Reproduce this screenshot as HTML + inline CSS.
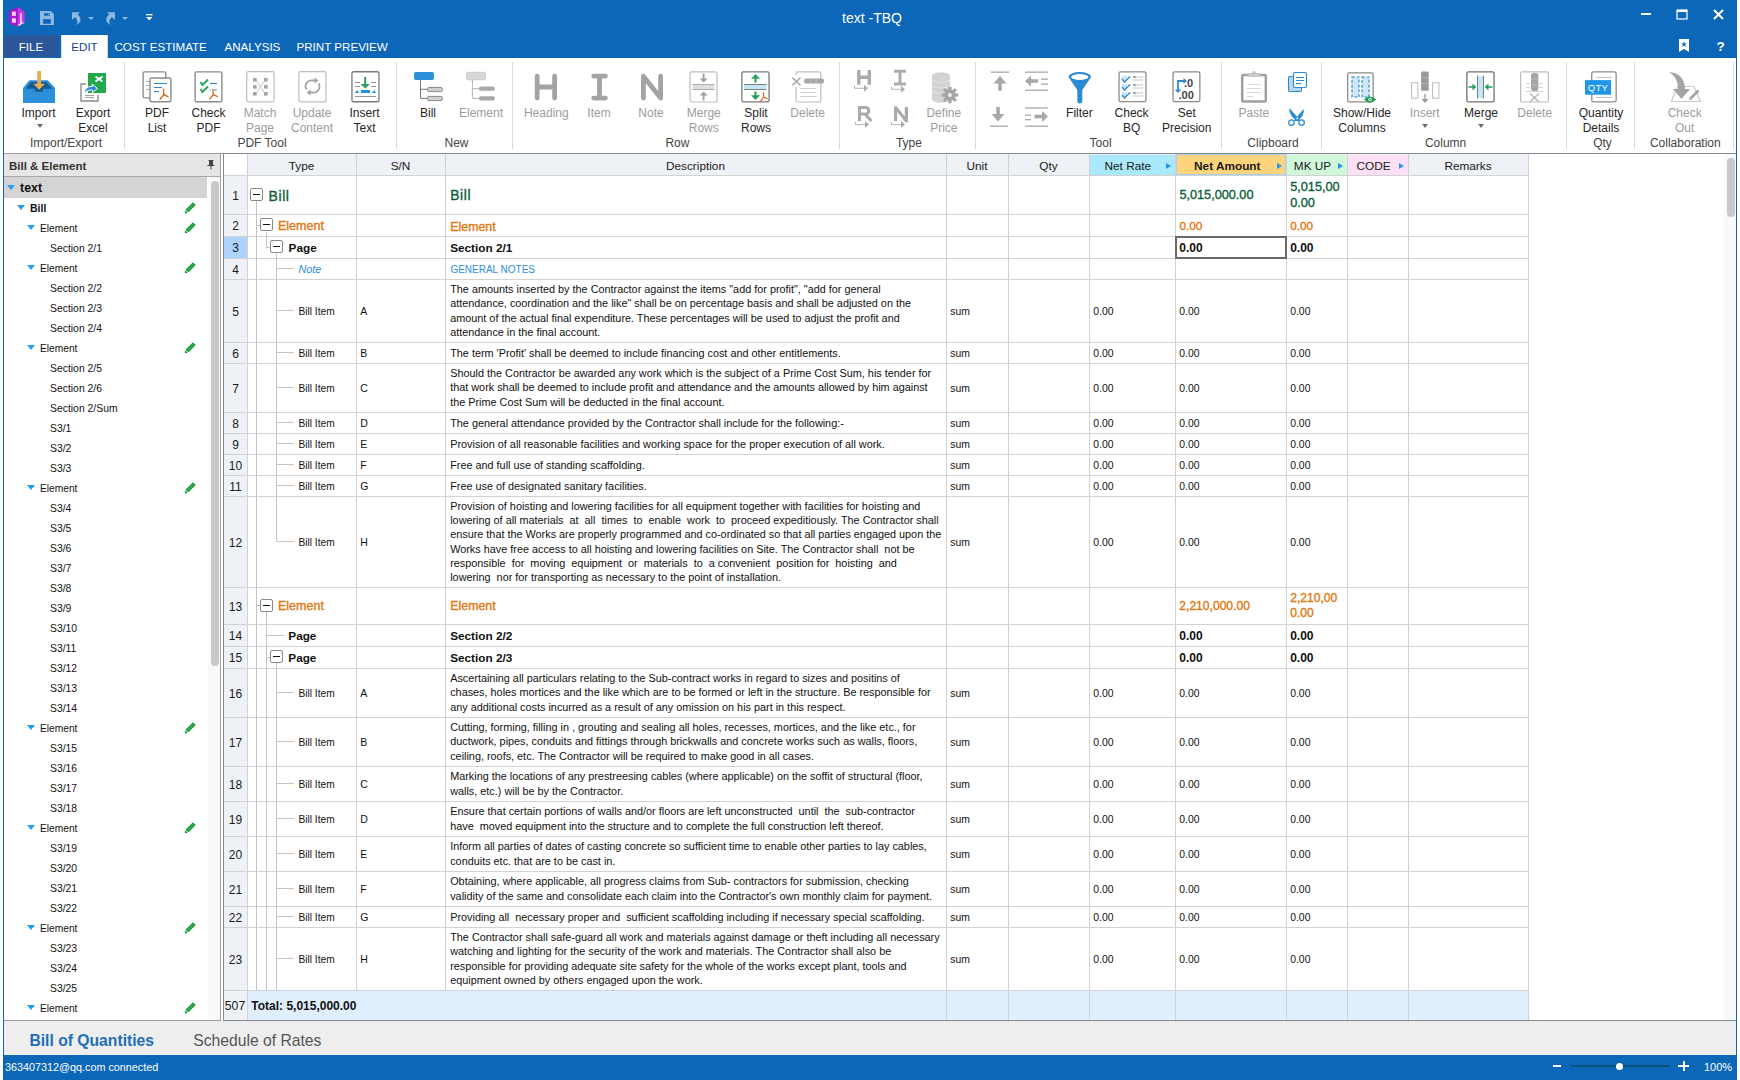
<!DOCTYPE html><html><head><meta charset="utf-8"><style>
html,body{margin:0;padding:0}
body{width:1740px;height:1080px;position:relative;overflow:hidden;background:#fff;font-family:"Liberation Sans", sans-serif}
.t{position:absolute;white-space:nowrap}
.b{position:absolute;box-sizing:border-box}
svg{position:absolute;overflow:visible}
</style></head><body>
<div class="b" style="left:3px;top:0px;width:1734px;height:1080px;background:#0c67b8"></div>
<div class="t" style="left:572px;width:600px;text-align:center;top:10.10px;font-size:14px;line-height:16.1px;color:#fff;font-weight:normal;font-style:normal;">text -TBQ</div>
<div class="b" style="left:4px;top:35px;width:54px;height:22px;background:#2b579a"></div>
<div class="b" style="left:61px;top:35px;width:47px;height:23px;background:#fff;border-left:1px solid #e0dcd6;border-right:1px solid #d8d2ca"></div>
<div class="t" style="left:-269px;width:600px;text-align:center;top:40.31px;font-size:11.6px;line-height:13.34px;color:#fff;font-weight:normal;font-style:normal;">FILE</div>
<div class="t" style="left:-215.5px;width:600px;text-align:center;top:40.31px;font-size:11.6px;line-height:13.34px;color:#163f8c;font-weight:normal;font-style:normal;">EDIT</div>
<div class="t" style="left:114.5px;top:40.31px;font-size:11.6px;line-height:13.34px;color:#fff;font-weight:normal;font-style:normal;">COST ESTIMATE</div>
<div class="t" style="left:224.5px;top:40.31px;font-size:11.6px;line-height:13.34px;color:#fff;font-weight:normal;font-style:normal;">ANALYSIS</div>
<div class="t" style="left:296.5px;top:40.31px;font-size:11.6px;line-height:13.34px;color:#fff;font-weight:normal;font-style:normal;">PRINT PREVIEW</div>
<div class="b" style="left:4px;top:58px;width:1732px;height:95px;background:#fff"></div>
<div class="b" style="left:4px;top:153px;width:1732px;height:1px;background:#9a9fae"></div>
<div class="b" style="left:4px;top:154px;width:1732px;height:867px;background:#fff"></div>
<div class="b" style="left:4px;top:1021px;width:1732px;height:34px;background:#eeeeee"></div>
<div class="t" style="left:-261.5px;width:600px;text-align:center;top:106.94px;font-size:12px;line-height:13.8px;color:#262626;font-weight:normal;font-style:normal;">Import</div>
<div class="t" style="left:-207px;width:600px;text-align:center;top:106.94px;font-size:12px;line-height:13.8px;color:#262626;font-weight:normal;font-style:normal;">Export</div>
<div class="t" style="left:-207px;width:600px;text-align:center;top:121.94px;font-size:12px;line-height:13.8px;color:#262626;font-weight:normal;font-style:normal;">Excel</div>
<div class="t" style="left:-143px;width:600px;text-align:center;top:106.94px;font-size:12px;line-height:13.8px;color:#262626;font-weight:normal;font-style:normal;">PDF</div>
<div class="t" style="left:-143px;width:600px;text-align:center;top:121.94px;font-size:12px;line-height:13.8px;color:#262626;font-weight:normal;font-style:normal;">List</div>
<div class="t" style="left:-91.5px;width:600px;text-align:center;top:106.94px;font-size:12px;line-height:13.8px;color:#262626;font-weight:normal;font-style:normal;">Check</div>
<div class="t" style="left:-91.5px;width:600px;text-align:center;top:121.94px;font-size:12px;line-height:13.8px;color:#262626;font-weight:normal;font-style:normal;">PDF</div>
<div class="t" style="left:-40px;width:600px;text-align:center;top:106.94px;font-size:12px;line-height:13.8px;color:#9c9c9c;font-weight:normal;font-style:normal;">Match</div>
<div class="t" style="left:-40px;width:600px;text-align:center;top:121.94px;font-size:12px;line-height:13.8px;color:#9c9c9c;font-weight:normal;font-style:normal;">Page</div>
<div class="t" style="left:12px;width:600px;text-align:center;top:106.94px;font-size:12px;line-height:13.8px;color:#9c9c9c;font-weight:normal;font-style:normal;">Update</div>
<div class="t" style="left:12px;width:600px;text-align:center;top:121.94px;font-size:12px;line-height:13.8px;color:#9c9c9c;font-weight:normal;font-style:normal;">Content</div>
<div class="t" style="left:64.5px;width:600px;text-align:center;top:106.94px;font-size:12px;line-height:13.8px;color:#262626;font-weight:normal;font-style:normal;">Insert</div>
<div class="t" style="left:64.5px;width:600px;text-align:center;top:121.94px;font-size:12px;line-height:13.8px;color:#262626;font-weight:normal;font-style:normal;">Text</div>
<div class="t" style="left:128px;width:600px;text-align:center;top:106.94px;font-size:12px;line-height:13.8px;color:#262626;font-weight:normal;font-style:normal;">Bill</div>
<div class="t" style="left:181px;width:600px;text-align:center;top:106.94px;font-size:12px;line-height:13.8px;color:#9c9c9c;font-weight:normal;font-style:normal;">Element</div>
<div class="t" style="left:246.29999999999995px;width:600px;text-align:center;top:106.94px;font-size:12px;line-height:13.8px;color:#9c9c9c;font-weight:normal;font-style:normal;">Heading</div>
<div class="t" style="left:299px;width:600px;text-align:center;top:106.94px;font-size:12px;line-height:13.8px;color:#9c9c9c;font-weight:normal;font-style:normal;">Item</div>
<div class="t" style="left:351px;width:600px;text-align:center;top:106.94px;font-size:12px;line-height:13.8px;color:#9c9c9c;font-weight:normal;font-style:normal;">Note</div>
<div class="t" style="left:403.79999999999995px;width:600px;text-align:center;top:106.94px;font-size:12px;line-height:13.8px;color:#9c9c9c;font-weight:normal;font-style:normal;">Merge</div>
<div class="t" style="left:403.79999999999995px;width:600px;text-align:center;top:121.94px;font-size:12px;line-height:13.8px;color:#9c9c9c;font-weight:normal;font-style:normal;">Rows</div>
<div class="t" style="left:456px;width:600px;text-align:center;top:106.94px;font-size:12px;line-height:13.8px;color:#262626;font-weight:normal;font-style:normal;">Split</div>
<div class="t" style="left:456px;width:600px;text-align:center;top:121.94px;font-size:12px;line-height:13.8px;color:#262626;font-weight:normal;font-style:normal;">Rows</div>
<div class="t" style="left:507.70000000000005px;width:600px;text-align:center;top:106.94px;font-size:12px;line-height:13.8px;color:#9c9c9c;font-weight:normal;font-style:normal;">Delete</div>
<div class="t" style="left:643.8px;width:600px;text-align:center;top:106.94px;font-size:12px;line-height:13.8px;color:#9c9c9c;font-weight:normal;font-style:normal;">Define</div>
<div class="t" style="left:643.8px;width:600px;text-align:center;top:121.94px;font-size:12px;line-height:13.8px;color:#9c9c9c;font-weight:normal;font-style:normal;">Price</div>
<div class="t" style="left:779.4000000000001px;width:600px;text-align:center;top:106.94px;font-size:12px;line-height:13.8px;color:#262626;font-weight:normal;font-style:normal;">Filter</div>
<div class="t" style="left:831.5999999999999px;width:600px;text-align:center;top:106.94px;font-size:12px;line-height:13.8px;color:#262626;font-weight:normal;font-style:normal;">Check</div>
<div class="t" style="left:831.5999999999999px;width:600px;text-align:center;top:121.94px;font-size:12px;line-height:13.8px;color:#262626;font-weight:normal;font-style:normal;">BQ</div>
<div class="t" style="left:886.8px;width:600px;text-align:center;top:106.94px;font-size:12px;line-height:13.8px;color:#262626;font-weight:normal;font-style:normal;">Set</div>
<div class="t" style="left:886.8px;width:600px;text-align:center;top:121.94px;font-size:12px;line-height:13.8px;color:#262626;font-weight:normal;font-style:normal;">Precision</div>
<div class="t" style="left:953.8px;width:600px;text-align:center;top:106.94px;font-size:12px;line-height:13.8px;color:#9c9c9c;font-weight:normal;font-style:normal;">Paste</div>
<div class="t" style="left:1062px;width:600px;text-align:center;top:106.94px;font-size:12px;line-height:13.8px;color:#262626;font-weight:normal;font-style:normal;">Show/Hide</div>
<div class="t" style="left:1062px;width:600px;text-align:center;top:121.94px;font-size:12px;line-height:13.8px;color:#262626;font-weight:normal;font-style:normal;">Columns</div>
<div class="t" style="left:1124.7px;width:600px;text-align:center;top:106.94px;font-size:12px;line-height:13.8px;color:#9c9c9c;font-weight:normal;font-style:normal;">Insert</div>
<div class="t" style="left:1181px;width:600px;text-align:center;top:106.94px;font-size:12px;line-height:13.8px;color:#262626;font-weight:normal;font-style:normal;">Merge</div>
<div class="t" style="left:1234.7px;width:600px;text-align:center;top:106.94px;font-size:12px;line-height:13.8px;color:#9c9c9c;font-weight:normal;font-style:normal;">Delete</div>
<div class="t" style="left:1301px;width:600px;text-align:center;top:106.94px;font-size:12px;line-height:13.8px;color:#262626;font-weight:normal;font-style:normal;">Quantity</div>
<div class="t" style="left:1301px;width:600px;text-align:center;top:121.94px;font-size:12px;line-height:13.8px;color:#262626;font-weight:normal;font-style:normal;">Details</div>
<div class="t" style="left:1384.7px;width:600px;text-align:center;top:106.94px;font-size:12px;line-height:13.8px;color:#9c9c9c;font-weight:normal;font-style:normal;">Check</div>
<div class="t" style="left:1384.7px;width:600px;text-align:center;top:121.94px;font-size:12px;line-height:13.8px;color:#9c9c9c;font-weight:normal;font-style:normal;">Out</div>
<div class="t" style="left:-234px;width:600px;text-align:center;top:136.94px;font-size:12px;line-height:13.8px;color:#444;font-weight:normal;font-style:normal;">Import/Export</div>
<div class="t" style="left:-38px;width:600px;text-align:center;top:136.94px;font-size:12px;line-height:13.8px;color:#444;font-weight:normal;font-style:normal;">PDF Tool</div>
<div class="t" style="left:156.5px;width:600px;text-align:center;top:136.94px;font-size:12px;line-height:13.8px;color:#444;font-weight:normal;font-style:normal;">New</div>
<div class="t" style="left:377.4px;width:600px;text-align:center;top:136.94px;font-size:12px;line-height:13.8px;color:#444;font-weight:normal;font-style:normal;">Row</div>
<div class="t" style="left:608.9px;width:600px;text-align:center;top:136.94px;font-size:12px;line-height:13.8px;color:#444;font-weight:normal;font-style:normal;">Type</div>
<div class="t" style="left:800.5999999999999px;width:600px;text-align:center;top:136.94px;font-size:12px;line-height:13.8px;color:#444;font-weight:normal;font-style:normal;">Tool</div>
<div class="t" style="left:973px;width:600px;text-align:center;top:136.94px;font-size:12px;line-height:13.8px;color:#444;font-weight:normal;font-style:normal;">Clipboard</div>
<div class="t" style="left:1145.6px;width:600px;text-align:center;top:136.94px;font-size:12px;line-height:13.8px;color:#444;font-weight:normal;font-style:normal;">Column</div>
<div class="t" style="left:1302.5px;width:600px;text-align:center;top:136.94px;font-size:12px;line-height:13.8px;color:#444;font-weight:normal;font-style:normal;">Qty</div>
<div class="t" style="left:1385.3px;width:600px;text-align:center;top:136.94px;font-size:12px;line-height:13.8px;color:#444;font-weight:normal;font-style:normal;">Collaboration</div>
<div class="b" style="left:124px;top:62px;width:1px;height:87px;background:#dadada"></div>
<div class="b" style="left:396px;top:62px;width:1px;height:87px;background:#dadada"></div>
<div class="b" style="left:512px;top:62px;width:1px;height:87px;background:#dadada"></div>
<div class="b" style="left:839px;top:62px;width:1px;height:87px;background:#dadada"></div>
<div class="b" style="left:975px;top:62px;width:1px;height:87px;background:#dadada"></div>
<div class="b" style="left:1221px;top:62px;width:1px;height:87px;background:#dadada"></div>
<div class="b" style="left:1321px;top:62px;width:1px;height:87px;background:#dadada"></div>
<div class="b" style="left:1566px;top:62px;width:1px;height:87px;background:#dadada"></div>
<div class="b" style="left:1634px;top:62px;width:1px;height:87px;background:#dadada"></div>
<div class="b" style="left:1733px;top:62px;width:1px;height:87px;background:#dadada"></div>
<svg style="left:37px;top:124px" width="6" height="4"><path d="M0 0H6L3 4Z" fill="#6d6d6d"/></svg>
<svg style="left:1422px;top:124px" width="6" height="4"><path d="M0 0H6L3 4Z" fill="#6d6d6d"/></svg>
<svg style="left:1478px;top:124px" width="6" height="4"><path d="M0 0H6L3 4Z" fill="#6d6d6d"/></svg>
<div class="b" style="left:4px;top:153px;width:217px;height:868px;border:1px solid #a0a0a0;border-left:none;background:#fff"></div>
<div class="b" style="left:4px;top:154px;width:216px;height:23px;background:#e6e6e6;border-bottom:1px solid #a8a8a8"></div>
<div class="t" style="left:9px;top:159.91px;font-size:11.5px;line-height:13.22px;color:#333;font-weight:bold;font-style:normal;">Bill &amp; Element</div>
<svg style="left:207px;top:160px" width="8" height="10"><path d="M1.5 0.5H6.5M2.5 0.5V5.5M5.5 0.5V5.5M0.5 5.5H7.5M4 5.5V9.5" stroke="#444" stroke-width="1" fill="none"/><rect x="3" y="1" width="2" height="4" fill="#444"/></svg>
<div class="b" style="left:4px;top:177px;width:203px;height:21px;background:#d4d4d4"></div>
<div class="b" style="left:207px;top:177px;width:13px;height:843px;background:#fff"></div>
<div class="b" style="left:208px;top:177px;width:12px;height:843px;background:#f9f9f9"></div>
<div class="b" style="left:211px;top:181px;width:8px;height:485px;background:#c8c8c8;border-radius:4px"></div>
<svg style="left:7px;top:185.0px" width="8" height="5"><path d="M0 0H8L4 5Z" fill="#2a9cf0"/></svg>
<div class="t" style="left:20px;top:180.57px;font-size:12.4px;line-height:14.26px;color:#111;font-weight:bold;font-style:normal;">text</div>
<svg style="left:17px;top:205.0px" width="8" height="5"><path d="M0 0H8L4 5Z" fill="#2a9cf0"/></svg>
<div class="t" style="left:30px;top:201.83px;font-size:10.5px;line-height:12.07px;color:#111;font-weight:bold;font-style:normal;">Bill</div>
<svg style="left:183px;top:201.0px" width="14" height="14" viewBox="183 201 14 14"><path d="M186.4 209.6 L193 203.2 L194.8 205 L188.4 211.4 Z" fill="#4aaa6a" stroke="#119a2e" stroke-width="1.3" stroke-linejoin="round"/><path d="M184.8 213.2 L185.1 210.3 L187.8 213 Z" fill="#119a2e"/></svg>
<svg style="left:27px;top:225.0px" width="8" height="5"><path d="M0 0H8L4 5Z" fill="#2a9cf0"/></svg>
<div class="t" style="left:40px;top:223.10px;font-size:10.2px;line-height:11.73px;color:#111;font-weight:normal;font-style:normal;">Element</div>
<svg style="left:183px;top:221.0px" width="14" height="14" viewBox="183 201 14 14"><path d="M186.4 209.6 L193 203.2 L194.8 205 L188.4 211.4 Z" fill="#4aaa6a" stroke="#119a2e" stroke-width="1.3" stroke-linejoin="round"/><path d="M184.8 213.2 L185.1 210.3 L187.8 213 Z" fill="#119a2e"/></svg>
<div class="t" style="left:50px;top:242.92px;font-size:10.4px;line-height:11.96px;color:#111;font-weight:normal;font-style:normal;">Section 2/1</div>
<svg style="left:27px;top:265.0px" width="8" height="5"><path d="M0 0H8L4 5Z" fill="#2a9cf0"/></svg>
<div class="t" style="left:40px;top:263.10px;font-size:10.2px;line-height:11.73px;color:#111;font-weight:normal;font-style:normal;">Element</div>
<svg style="left:183px;top:261.0px" width="14" height="14" viewBox="183 201 14 14"><path d="M186.4 209.6 L193 203.2 L194.8 205 L188.4 211.4 Z" fill="#4aaa6a" stroke="#119a2e" stroke-width="1.3" stroke-linejoin="round"/><path d="M184.8 213.2 L185.1 210.3 L187.8 213 Z" fill="#119a2e"/></svg>
<div class="t" style="left:50px;top:282.92px;font-size:10.4px;line-height:11.96px;color:#111;font-weight:normal;font-style:normal;">Section 2/2</div>
<div class="t" style="left:50px;top:302.92px;font-size:10.4px;line-height:11.96px;color:#111;font-weight:normal;font-style:normal;">Section 2/3</div>
<div class="t" style="left:50px;top:322.92px;font-size:10.4px;line-height:11.96px;color:#111;font-weight:normal;font-style:normal;">Section 2/4</div>
<svg style="left:27px;top:345.0px" width="8" height="5"><path d="M0 0H8L4 5Z" fill="#2a9cf0"/></svg>
<div class="t" style="left:40px;top:343.10px;font-size:10.2px;line-height:11.73px;color:#111;font-weight:normal;font-style:normal;">Element</div>
<svg style="left:183px;top:341.0px" width="14" height="14" viewBox="183 201 14 14"><path d="M186.4 209.6 L193 203.2 L194.8 205 L188.4 211.4 Z" fill="#4aaa6a" stroke="#119a2e" stroke-width="1.3" stroke-linejoin="round"/><path d="M184.8 213.2 L185.1 210.3 L187.8 213 Z" fill="#119a2e"/></svg>
<div class="t" style="left:50px;top:362.92px;font-size:10.4px;line-height:11.96px;color:#111;font-weight:normal;font-style:normal;">Section 2/5</div>
<div class="t" style="left:50px;top:382.92px;font-size:10.4px;line-height:11.96px;color:#111;font-weight:normal;font-style:normal;">Section 2/6</div>
<div class="t" style="left:50px;top:402.92px;font-size:10.4px;line-height:11.96px;color:#111;font-weight:normal;font-style:normal;">Section 2/Sum</div>
<div class="t" style="left:50px;top:422.92px;font-size:10.4px;line-height:11.96px;color:#111;font-weight:normal;font-style:normal;">S3/1</div>
<div class="t" style="left:50px;top:442.92px;font-size:10.4px;line-height:11.96px;color:#111;font-weight:normal;font-style:normal;">S3/2</div>
<div class="t" style="left:50px;top:462.92px;font-size:10.4px;line-height:11.96px;color:#111;font-weight:normal;font-style:normal;">S3/3</div>
<svg style="left:27px;top:485.0px" width="8" height="5"><path d="M0 0H8L4 5Z" fill="#2a9cf0"/></svg>
<div class="t" style="left:40px;top:483.10px;font-size:10.2px;line-height:11.73px;color:#111;font-weight:normal;font-style:normal;">Element</div>
<svg style="left:183px;top:481.0px" width="14" height="14" viewBox="183 201 14 14"><path d="M186.4 209.6 L193 203.2 L194.8 205 L188.4 211.4 Z" fill="#4aaa6a" stroke="#119a2e" stroke-width="1.3" stroke-linejoin="round"/><path d="M184.8 213.2 L185.1 210.3 L187.8 213 Z" fill="#119a2e"/></svg>
<div class="t" style="left:50px;top:502.92px;font-size:10.4px;line-height:11.96px;color:#111;font-weight:normal;font-style:normal;">S3/4</div>
<div class="t" style="left:50px;top:522.92px;font-size:10.4px;line-height:11.96px;color:#111;font-weight:normal;font-style:normal;">S3/5</div>
<div class="t" style="left:50px;top:542.92px;font-size:10.4px;line-height:11.96px;color:#111;font-weight:normal;font-style:normal;">S3/6</div>
<div class="t" style="left:50px;top:562.92px;font-size:10.4px;line-height:11.96px;color:#111;font-weight:normal;font-style:normal;">S3/7</div>
<div class="t" style="left:50px;top:582.92px;font-size:10.4px;line-height:11.96px;color:#111;font-weight:normal;font-style:normal;">S3/8</div>
<div class="t" style="left:50px;top:602.92px;font-size:10.4px;line-height:11.96px;color:#111;font-weight:normal;font-style:normal;">S3/9</div>
<div class="t" style="left:50px;top:622.92px;font-size:10.4px;line-height:11.96px;color:#111;font-weight:normal;font-style:normal;">S3/10</div>
<div class="t" style="left:50px;top:642.92px;font-size:10.4px;line-height:11.96px;color:#111;font-weight:normal;font-style:normal;">S3/11</div>
<div class="t" style="left:50px;top:662.92px;font-size:10.4px;line-height:11.96px;color:#111;font-weight:normal;font-style:normal;">S3/12</div>
<div class="t" style="left:50px;top:682.92px;font-size:10.4px;line-height:11.96px;color:#111;font-weight:normal;font-style:normal;">S3/13</div>
<div class="t" style="left:50px;top:702.92px;font-size:10.4px;line-height:11.96px;color:#111;font-weight:normal;font-style:normal;">S3/14</div>
<svg style="left:27px;top:725.0px" width="8" height="5"><path d="M0 0H8L4 5Z" fill="#2a9cf0"/></svg>
<div class="t" style="left:40px;top:723.10px;font-size:10.2px;line-height:11.73px;color:#111;font-weight:normal;font-style:normal;">Element</div>
<svg style="left:183px;top:721.0px" width="14" height="14" viewBox="183 201 14 14"><path d="M186.4 209.6 L193 203.2 L194.8 205 L188.4 211.4 Z" fill="#4aaa6a" stroke="#119a2e" stroke-width="1.3" stroke-linejoin="round"/><path d="M184.8 213.2 L185.1 210.3 L187.8 213 Z" fill="#119a2e"/></svg>
<div class="t" style="left:50px;top:742.92px;font-size:10.4px;line-height:11.96px;color:#111;font-weight:normal;font-style:normal;">S3/15</div>
<div class="t" style="left:50px;top:762.92px;font-size:10.4px;line-height:11.96px;color:#111;font-weight:normal;font-style:normal;">S3/16</div>
<div class="t" style="left:50px;top:782.92px;font-size:10.4px;line-height:11.96px;color:#111;font-weight:normal;font-style:normal;">S3/17</div>
<div class="t" style="left:50px;top:802.92px;font-size:10.4px;line-height:11.96px;color:#111;font-weight:normal;font-style:normal;">S3/18</div>
<svg style="left:27px;top:825.0px" width="8" height="5"><path d="M0 0H8L4 5Z" fill="#2a9cf0"/></svg>
<div class="t" style="left:40px;top:823.10px;font-size:10.2px;line-height:11.73px;color:#111;font-weight:normal;font-style:normal;">Element</div>
<svg style="left:183px;top:821.0px" width="14" height="14" viewBox="183 201 14 14"><path d="M186.4 209.6 L193 203.2 L194.8 205 L188.4 211.4 Z" fill="#4aaa6a" stroke="#119a2e" stroke-width="1.3" stroke-linejoin="round"/><path d="M184.8 213.2 L185.1 210.3 L187.8 213 Z" fill="#119a2e"/></svg>
<div class="t" style="left:50px;top:842.92px;font-size:10.4px;line-height:11.96px;color:#111;font-weight:normal;font-style:normal;">S3/19</div>
<div class="t" style="left:50px;top:862.92px;font-size:10.4px;line-height:11.96px;color:#111;font-weight:normal;font-style:normal;">S3/20</div>
<div class="t" style="left:50px;top:882.92px;font-size:10.4px;line-height:11.96px;color:#111;font-weight:normal;font-style:normal;">S3/21</div>
<div class="t" style="left:50px;top:902.92px;font-size:10.4px;line-height:11.96px;color:#111;font-weight:normal;font-style:normal;">S3/22</div>
<svg style="left:27px;top:925.0px" width="8" height="5"><path d="M0 0H8L4 5Z" fill="#2a9cf0"/></svg>
<div class="t" style="left:40px;top:923.10px;font-size:10.2px;line-height:11.73px;color:#111;font-weight:normal;font-style:normal;">Element</div>
<svg style="left:183px;top:921.0px" width="14" height="14" viewBox="183 201 14 14"><path d="M186.4 209.6 L193 203.2 L194.8 205 L188.4 211.4 Z" fill="#4aaa6a" stroke="#119a2e" stroke-width="1.3" stroke-linejoin="round"/><path d="M184.8 213.2 L185.1 210.3 L187.8 213 Z" fill="#119a2e"/></svg>
<div class="t" style="left:50px;top:942.92px;font-size:10.4px;line-height:11.96px;color:#111;font-weight:normal;font-style:normal;">S3/23</div>
<div class="t" style="left:50px;top:962.92px;font-size:10.4px;line-height:11.96px;color:#111;font-weight:normal;font-style:normal;">S3/24</div>
<div class="t" style="left:50px;top:982.92px;font-size:10.4px;line-height:11.96px;color:#111;font-weight:normal;font-style:normal;">S3/25</div>
<svg style="left:27px;top:1005.0px" width="8" height="5"><path d="M0 0H8L4 5Z" fill="#2a9cf0"/></svg>
<div class="t" style="left:40px;top:1003.10px;font-size:10.2px;line-height:11.73px;color:#111;font-weight:normal;font-style:normal;">Element</div>
<svg style="left:183px;top:1001.0px" width="14" height="14" viewBox="183 201 14 14"><path d="M186.4 209.6 L193 203.2 L194.8 205 L188.4 211.4 Z" fill="#4aaa6a" stroke="#119a2e" stroke-width="1.3" stroke-linejoin="round"/><path d="M184.8 213.2 L185.1 210.3 L187.8 213 Z" fill="#119a2e"/></svg>
<div class="b" style="left:223px;top:153px;width:1513px;height:868px;border:1px solid #858793;border-right:none;background:#fff"></div>
<div class="b" style="left:248px;top:154px;width:1281px;height:21px;background:#eef1f6"></div>
<div class="b" style="left:248px;top:155px;width:108px;height:20px;background:#eef1f6"></div>
<div class="b" style="left:357px;top:155px;width:88px;height:20px;background:#eef1f6"></div>
<div class="b" style="left:446px;top:155px;width:500px;height:20px;background:#eef1f6"></div>
<div class="b" style="left:947px;top:155px;width:61px;height:20px;background:#eef1f6"></div>
<div class="b" style="left:1009px;top:155px;width:80px;height:20px;background:#eef1f6"></div>
<div class="b" style="left:1090px;top:155px;width:85px;height:20px;background:#aae8fb"></div>
<div class="b" style="left:1176px;top:155px;width:110px;height:20px;background:#fdd47c"></div>
<div class="b" style="left:1287px;top:155px;width:60px;height:20px;background:#d0f9da"></div>
<div class="b" style="left:1348px;top:155px;width:60px;height:20px;background:#fde0f5"></div>
<div class="b" style="left:1409px;top:155px;width:119px;height:20px;background:#eef1f6"></div>
<div class="b" style="left:1176px;top:154px;width:110px;height:21px;border:1px solid #a3cff5;background:#fdd47c"></div>
<div class="b" style="left:224px;top:176px;width:23px;height:844px;background:#eef2f7"></div>
<div class="b" style="left:224px;top:237px;width:23px;height:21px;background:#acd3f9"></div>
<div class="b" style="left:248px;top:991px;width:1281px;height:29px;background:#dfeffd"></div>
<div class="b" style="left:224px;top:175px;width:1305px;height:1px;background:#d2d2d2"></div>
<div class="b" style="left:224px;top:214px;width:1305px;height:1px;background:#d2d2d2"></div>
<div class="b" style="left:224px;top:236px;width:1305px;height:1px;background:#d2d2d2"></div>
<div class="b" style="left:224px;top:258px;width:1305px;height:1px;background:#d2d2d2"></div>
<div class="b" style="left:224px;top:279px;width:1305px;height:1px;background:#d2d2d2"></div>
<div class="b" style="left:224px;top:342px;width:1305px;height:1px;background:#d2d2d2"></div>
<div class="b" style="left:224px;top:363px;width:1305px;height:1px;background:#d2d2d2"></div>
<div class="b" style="left:224px;top:412px;width:1305px;height:1px;background:#d2d2d2"></div>
<div class="b" style="left:224px;top:433px;width:1305px;height:1px;background:#d2d2d2"></div>
<div class="b" style="left:224px;top:454px;width:1305px;height:1px;background:#d2d2d2"></div>
<div class="b" style="left:224px;top:475px;width:1305px;height:1px;background:#d2d2d2"></div>
<div class="b" style="left:224px;top:496px;width:1305px;height:1px;background:#d2d2d2"></div>
<div class="b" style="left:224px;top:587px;width:1305px;height:1px;background:#d2d2d2"></div>
<div class="b" style="left:224px;top:624px;width:1305px;height:1px;background:#d2d2d2"></div>
<div class="b" style="left:224px;top:646px;width:1305px;height:1px;background:#d2d2d2"></div>
<div class="b" style="left:224px;top:668px;width:1305px;height:1px;background:#d2d2d2"></div>
<div class="b" style="left:224px;top:717px;width:1305px;height:1px;background:#d2d2d2"></div>
<div class="b" style="left:224px;top:766px;width:1305px;height:1px;background:#d2d2d2"></div>
<div class="b" style="left:224px;top:801px;width:1305px;height:1px;background:#d2d2d2"></div>
<div class="b" style="left:224px;top:836px;width:1305px;height:1px;background:#d2d2d2"></div>
<div class="b" style="left:224px;top:871px;width:1305px;height:1px;background:#d2d2d2"></div>
<div class="b" style="left:224px;top:906px;width:1305px;height:1px;background:#d2d2d2"></div>
<div class="b" style="left:224px;top:927px;width:1305px;height:1px;background:#d2d2d2"></div>
<div class="b" style="left:224px;top:990px;width:1305px;height:1px;background:#d2d2d2"></div>
<div class="b" style="left:247px;top:154px;width:1px;height:866px;background:#d2d2d2"></div>
<div class="b" style="left:356px;top:154px;width:1px;height:836px;background:#d2d2d2"></div>
<div class="b" style="left:445px;top:154px;width:1px;height:836px;background:#d2d2d2"></div>
<div class="b" style="left:946px;top:154px;width:1px;height:866px;background:#d2d2d2"></div>
<div class="b" style="left:1008px;top:154px;width:1px;height:866px;background:#d2d2d2"></div>
<div class="b" style="left:1089px;top:154px;width:1px;height:866px;background:#d2d2d2"></div>
<div class="b" style="left:1175px;top:154px;width:1px;height:866px;background:#d2d2d2"></div>
<div class="b" style="left:1286px;top:154px;width:1px;height:866px;background:#d2d2d2"></div>
<div class="b" style="left:1347px;top:154px;width:1px;height:866px;background:#d2d2d2"></div>
<div class="b" style="left:1408px;top:154px;width:1px;height:866px;background:#d2d2d2"></div>
<div class="b" style="left:1528px;top:154px;width:1px;height:866px;background:#d2d2d2"></div>
<div class="t" style="left:1.5px;width:600px;text-align:center;top:159.63px;font-size:11.8px;line-height:13.57px;color:#1a1a1a;font-weight:normal;font-style:normal;">Type</div>
<div class="t" style="left:100.5px;width:600px;text-align:center;top:159.63px;font-size:11.8px;line-height:13.57px;color:#1a1a1a;font-weight:normal;font-style:normal;">S/N</div>
<div class="t" style="left:395.5px;width:600px;text-align:center;top:159.63px;font-size:11.8px;line-height:13.57px;color:#1a1a1a;font-weight:normal;font-style:normal;">Description</div>
<div class="t" style="left:677.0px;width:600px;text-align:center;top:159.63px;font-size:11.8px;line-height:13.57px;color:#1a1a1a;font-weight:normal;font-style:normal;">Unit</div>
<div class="t" style="left:748.5px;width:600px;text-align:center;top:159.63px;font-size:11.8px;line-height:13.57px;color:#1a1a1a;font-weight:normal;font-style:normal;">Qty</div>
<div class="t" style="left:827.8px;width:600px;text-align:center;top:159.63px;font-size:11.8px;line-height:13.57px;color:#1a1a1a;font-weight:normal;font-style:normal;">Net Rate</div>
<div class="t" style="left:927.3px;width:600px;text-align:center;top:159.63px;font-size:11.8px;line-height:13.57px;color:#1a1a1a;font-weight:bold;font-style:normal;">Net Amount</div>
<div class="t" style="left:1012.5px;width:600px;text-align:center;top:159.63px;font-size:11.8px;line-height:13.57px;color:#1a1a1a;font-weight:normal;font-style:normal;">MK UP</div>
<div class="t" style="left:1073.5px;width:600px;text-align:center;top:159.63px;font-size:11.8px;line-height:13.57px;color:#1a1a1a;font-weight:normal;font-style:normal;">CODE</div>
<div class="t" style="left:1168.0px;width:600px;text-align:center;top:159.63px;font-size:11.8px;line-height:13.57px;color:#1a1a1a;font-weight:normal;font-style:normal;">Remarks</div>
<svg style="left:1166px;top:162.5px" width="5" height="6"><path d="M0 0L5 3L0 6Z" fill="#2196f3"/></svg>
<svg style="left:1277px;top:162.5px" width="5" height="6"><path d="M0 0L5 3L0 6Z" fill="#2196f3"/></svg>
<svg style="left:1338px;top:162.5px" width="5" height="6"><path d="M0 0L5 3L0 6Z" fill="#2196f3"/></svg>
<svg style="left:1399px;top:162.5px" width="5" height="6"><path d="M0 0L5 3L0 6Z" fill="#2196f3"/></svg>
<div class="t" style="left:-64.5px;width:600px;text-align:center;top:189.94px;font-size:12px;line-height:13.8px;color:#1a1a1a;font-weight:normal;font-style:normal;">1</div>
<div class="t" style="left:-64.5px;width:600px;text-align:center;top:220.44px;font-size:12px;line-height:13.8px;color:#1a1a1a;font-weight:normal;font-style:normal;">2</div>
<div class="t" style="left:-64.5px;width:600px;text-align:center;top:242.44px;font-size:12px;line-height:13.8px;color:#1a1a1a;font-weight:normal;font-style:normal;">3</div>
<div class="t" style="left:-64.5px;width:600px;text-align:center;top:263.94px;font-size:12px;line-height:13.8px;color:#1a1a1a;font-weight:normal;font-style:normal;">4</div>
<div class="t" style="left:-64.5px;width:600px;text-align:center;top:305.94px;font-size:12px;line-height:13.8px;color:#1a1a1a;font-weight:normal;font-style:normal;">5</div>
<div class="t" style="left:-64.5px;width:600px;text-align:center;top:347.94px;font-size:12px;line-height:13.8px;color:#1a1a1a;font-weight:normal;font-style:normal;">6</div>
<div class="t" style="left:-64.5px;width:600px;text-align:center;top:382.94px;font-size:12px;line-height:13.8px;color:#1a1a1a;font-weight:normal;font-style:normal;">7</div>
<div class="t" style="left:-64.5px;width:600px;text-align:center;top:417.94px;font-size:12px;line-height:13.8px;color:#1a1a1a;font-weight:normal;font-style:normal;">8</div>
<div class="t" style="left:-64.5px;width:600px;text-align:center;top:438.94px;font-size:12px;line-height:13.8px;color:#1a1a1a;font-weight:normal;font-style:normal;">9</div>
<div class="t" style="left:-64.5px;width:600px;text-align:center;top:459.94px;font-size:12px;line-height:13.8px;color:#1a1a1a;font-weight:normal;font-style:normal;">10</div>
<div class="t" style="left:-64.5px;width:600px;text-align:center;top:480.94px;font-size:12px;line-height:13.8px;color:#1a1a1a;font-weight:normal;font-style:normal;">11</div>
<div class="t" style="left:-64.5px;width:600px;text-align:center;top:536.94px;font-size:12px;line-height:13.8px;color:#1a1a1a;font-weight:normal;font-style:normal;">12</div>
<div class="t" style="left:-64.5px;width:600px;text-align:center;top:600.94px;font-size:12px;line-height:13.8px;color:#1a1a1a;font-weight:normal;font-style:normal;">13</div>
<div class="t" style="left:-64.5px;width:600px;text-align:center;top:630.44px;font-size:12px;line-height:13.8px;color:#1a1a1a;font-weight:normal;font-style:normal;">14</div>
<div class="t" style="left:-64.5px;width:600px;text-align:center;top:652.44px;font-size:12px;line-height:13.8px;color:#1a1a1a;font-weight:normal;font-style:normal;">15</div>
<div class="t" style="left:-64.5px;width:600px;text-align:center;top:687.94px;font-size:12px;line-height:13.8px;color:#1a1a1a;font-weight:normal;font-style:normal;">16</div>
<div class="t" style="left:-64.5px;width:600px;text-align:center;top:736.94px;font-size:12px;line-height:13.8px;color:#1a1a1a;font-weight:normal;font-style:normal;">17</div>
<div class="t" style="left:-64.5px;width:600px;text-align:center;top:778.94px;font-size:12px;line-height:13.8px;color:#1a1a1a;font-weight:normal;font-style:normal;">18</div>
<div class="t" style="left:-64.5px;width:600px;text-align:center;top:813.94px;font-size:12px;line-height:13.8px;color:#1a1a1a;font-weight:normal;font-style:normal;">19</div>
<div class="t" style="left:-64.5px;width:600px;text-align:center;top:848.94px;font-size:12px;line-height:13.8px;color:#1a1a1a;font-weight:normal;font-style:normal;">20</div>
<div class="t" style="left:-64.5px;width:600px;text-align:center;top:883.94px;font-size:12px;line-height:13.8px;color:#1a1a1a;font-weight:normal;font-style:normal;">21</div>
<div class="t" style="left:-64.5px;width:600px;text-align:center;top:911.94px;font-size:12px;line-height:13.8px;color:#1a1a1a;font-weight:normal;font-style:normal;">22</div>
<div class="t" style="left:-64.5px;width:600px;text-align:center;top:953.94px;font-size:12px;line-height:13.8px;color:#1a1a1a;font-weight:normal;font-style:normal;">23</div>
<div class="t" style="left:-65px;width:600px;text-align:center;top:998.56px;font-size:12.2px;line-height:14.03px;color:#1a1a1a;font-weight:normal;font-style:normal;">507</div>
<div class="t" style="left:251.3px;top:1000.44px;font-size:12px;line-height:13.8px;color:#111;font-weight:bold;font-style:normal;">Total: 5,015,000.00</div>
<div class="b" style="left:256px;top:201px;width:1px;height:789px;background:#c4c4c4"></div>
<div class="b" style="left:266px;top:232px;width:1px;height:16px;background:#c4c4c4"></div>
<div class="b" style="left:266px;top:612px;width:1px;height:378px;background:#c4c4c4"></div>
<div class="b" style="left:276px;top:254px;width:1px;height:288px;background:#c4c4c4"></div>
<div class="b" style="left:276px;top:663px;width:1px;height:327px;background:#c4c4c4"></div>
<div class="b" style="left:250px;top:188px;width:13px;height:13px;border:1px solid #8a8a8a;border-radius:2px;background:#fff"></div>
<div class="b" style="left:253px;top:194px;width:7px;height:1.4px;background:#111"></div>
<div class="t" style="left:268.5px;top:187.60px;font-size:14px;line-height:16.1px;color:#0a6035;font-weight:normal;font-style:normal;-webkit-text-stroke:0.35px currentColor;letter-spacing:0.6px">Bill</div>
<div class="b" style="left:256px;top:225px;width:4px;height:1px;background:#c4c4c4"></div>
<div class="b" style="left:260px;top:218px;width:13px;height:13px;border:1px solid #8a8a8a;border-radius:2px;background:#fff"></div>
<div class="b" style="left:263px;top:224px;width:7px;height:1.4px;background:#111"></div>
<div class="t" style="left:278px;top:219.48px;font-size:12.5px;line-height:14.37px;color:#e0770f;font-weight:normal;font-style:normal;-webkit-text-stroke:0.35px currentColor">Element</div>
<div class="b" style="left:266px;top:247px;width:4px;height:1px;background:#c4c4c4"></div>
<div class="b" style="left:270px;top:240px;width:13px;height:13px;border:1px solid #8a8a8a;border-radius:2px;background:#fff"></div>
<div class="b" style="left:273px;top:246px;width:7px;height:1.4px;background:#111"></div>
<div class="t" style="left:288.6px;top:241.07px;font-size:11.75px;line-height:13.51px;color:#111;font-weight:bold;font-style:normal;">Page</div>
<div class="b" style="left:276px;top:268px;width:18px;height:1px;background:#c4c4c4"></div>
<div class="t" style="left:298.6px;top:263.10px;font-size:10.75px;line-height:12.36px;color:#2b8fdc;font-weight:normal;font-style:italic;">Note</div>
<div class="b" style="left:276px;top:310px;width:18px;height:1px;background:#c4c4c4"></div>
<div class="t" style="left:298.4px;top:305.60px;font-size:10.2px;line-height:11.73px;color:#111;font-weight:normal;font-style:normal;">Bill Item</div>
<div class="t" style="left:360.3px;top:305.33px;font-size:10.5px;line-height:12.07px;color:#111;font-weight:normal;font-style:normal;">A</div>
<div class="b" style="left:276px;top:352px;width:18px;height:1px;background:#c4c4c4"></div>
<div class="t" style="left:298.4px;top:347.60px;font-size:10.2px;line-height:11.73px;color:#111;font-weight:normal;font-style:normal;">Bill Item</div>
<div class="t" style="left:360.3px;top:347.33px;font-size:10.5px;line-height:12.07px;color:#111;font-weight:normal;font-style:normal;">B</div>
<div class="b" style="left:276px;top:387px;width:18px;height:1px;background:#c4c4c4"></div>
<div class="t" style="left:298.4px;top:382.60px;font-size:10.2px;line-height:11.73px;color:#111;font-weight:normal;font-style:normal;">Bill Item</div>
<div class="t" style="left:360.3px;top:382.33px;font-size:10.5px;line-height:12.07px;color:#111;font-weight:normal;font-style:normal;">C</div>
<div class="b" style="left:276px;top:422px;width:18px;height:1px;background:#c4c4c4"></div>
<div class="t" style="left:298.4px;top:417.60px;font-size:10.2px;line-height:11.73px;color:#111;font-weight:normal;font-style:normal;">Bill Item</div>
<div class="t" style="left:360.3px;top:417.33px;font-size:10.5px;line-height:12.07px;color:#111;font-weight:normal;font-style:normal;">D</div>
<div class="b" style="left:276px;top:443px;width:18px;height:1px;background:#c4c4c4"></div>
<div class="t" style="left:298.4px;top:438.60px;font-size:10.2px;line-height:11.73px;color:#111;font-weight:normal;font-style:normal;">Bill Item</div>
<div class="t" style="left:360.3px;top:438.33px;font-size:10.5px;line-height:12.07px;color:#111;font-weight:normal;font-style:normal;">E</div>
<div class="b" style="left:276px;top:464px;width:18px;height:1px;background:#c4c4c4"></div>
<div class="t" style="left:298.4px;top:459.60px;font-size:10.2px;line-height:11.73px;color:#111;font-weight:normal;font-style:normal;">Bill Item</div>
<div class="t" style="left:360.3px;top:459.33px;font-size:10.5px;line-height:12.07px;color:#111;font-weight:normal;font-style:normal;">F</div>
<div class="b" style="left:276px;top:485px;width:18px;height:1px;background:#c4c4c4"></div>
<div class="t" style="left:298.4px;top:480.60px;font-size:10.2px;line-height:11.73px;color:#111;font-weight:normal;font-style:normal;">Bill Item</div>
<div class="t" style="left:360.3px;top:480.33px;font-size:10.5px;line-height:12.07px;color:#111;font-weight:normal;font-style:normal;">G</div>
<div class="b" style="left:276px;top:541px;width:18px;height:1px;background:#c4c4c4"></div>
<div class="t" style="left:298.4px;top:536.60px;font-size:10.2px;line-height:11.73px;color:#111;font-weight:normal;font-style:normal;">Bill Item</div>
<div class="t" style="left:360.3px;top:536.33px;font-size:10.5px;line-height:12.07px;color:#111;font-weight:normal;font-style:normal;">H</div>
<div class="b" style="left:256px;top:605px;width:4px;height:1px;background:#c4c4c4"></div>
<div class="b" style="left:260px;top:599px;width:13px;height:13px;border:1px solid #8a8a8a;border-radius:2px;background:#fff"></div>
<div class="b" style="left:263px;top:605px;width:7px;height:1.4px;background:#111"></div>
<div class="t" style="left:278px;top:599.08px;font-size:12.5px;line-height:14.37px;color:#e0770f;font-weight:normal;font-style:normal;-webkit-text-stroke:0.35px currentColor">Element</div>
<div class="b" style="left:266px;top:635px;width:18px;height:1px;background:#c4c4c4"></div>
<div class="t" style="left:288.3px;top:629.07px;font-size:11.75px;line-height:13.51px;color:#111;font-weight:bold;font-style:normal;">Page</div>
<div class="b" style="left:266px;top:657px;width:4px;height:1px;background:#c4c4c4"></div>
<div class="b" style="left:270px;top:650px;width:13px;height:13px;border:1px solid #8a8a8a;border-radius:2px;background:#fff"></div>
<div class="b" style="left:273px;top:656px;width:7px;height:1.4px;background:#111"></div>
<div class="t" style="left:288.3px;top:651.07px;font-size:11.75px;line-height:13.51px;color:#111;font-weight:bold;font-style:normal;">Page</div>
<div class="b" style="left:276px;top:692px;width:18px;height:1px;background:#c4c4c4"></div>
<div class="t" style="left:298.4px;top:687.60px;font-size:10.2px;line-height:11.73px;color:#111;font-weight:normal;font-style:normal;">Bill Item</div>
<div class="t" style="left:360.3px;top:687.33px;font-size:10.5px;line-height:12.07px;color:#111;font-weight:normal;font-style:normal;">A</div>
<div class="b" style="left:276px;top:741px;width:18px;height:1px;background:#c4c4c4"></div>
<div class="t" style="left:298.4px;top:736.60px;font-size:10.2px;line-height:11.73px;color:#111;font-weight:normal;font-style:normal;">Bill Item</div>
<div class="t" style="left:360.3px;top:736.33px;font-size:10.5px;line-height:12.07px;color:#111;font-weight:normal;font-style:normal;">B</div>
<div class="b" style="left:276px;top:783px;width:18px;height:1px;background:#c4c4c4"></div>
<div class="t" style="left:298.4px;top:778.60px;font-size:10.2px;line-height:11.73px;color:#111;font-weight:normal;font-style:normal;">Bill Item</div>
<div class="t" style="left:360.3px;top:778.33px;font-size:10.5px;line-height:12.07px;color:#111;font-weight:normal;font-style:normal;">C</div>
<div class="b" style="left:276px;top:818px;width:18px;height:1px;background:#c4c4c4"></div>
<div class="t" style="left:298.4px;top:813.60px;font-size:10.2px;line-height:11.73px;color:#111;font-weight:normal;font-style:normal;">Bill Item</div>
<div class="t" style="left:360.3px;top:813.33px;font-size:10.5px;line-height:12.07px;color:#111;font-weight:normal;font-style:normal;">D</div>
<div class="b" style="left:276px;top:853px;width:18px;height:1px;background:#c4c4c4"></div>
<div class="t" style="left:298.4px;top:848.60px;font-size:10.2px;line-height:11.73px;color:#111;font-weight:normal;font-style:normal;">Bill Item</div>
<div class="t" style="left:360.3px;top:848.33px;font-size:10.5px;line-height:12.07px;color:#111;font-weight:normal;font-style:normal;">E</div>
<div class="b" style="left:276px;top:888px;width:18px;height:1px;background:#c4c4c4"></div>
<div class="t" style="left:298.4px;top:883.60px;font-size:10.2px;line-height:11.73px;color:#111;font-weight:normal;font-style:normal;">Bill Item</div>
<div class="t" style="left:360.3px;top:883.33px;font-size:10.5px;line-height:12.07px;color:#111;font-weight:normal;font-style:normal;">F</div>
<div class="b" style="left:276px;top:916px;width:18px;height:1px;background:#c4c4c4"></div>
<div class="t" style="left:298.4px;top:911.60px;font-size:10.2px;line-height:11.73px;color:#111;font-weight:normal;font-style:normal;">Bill Item</div>
<div class="t" style="left:360.3px;top:911.33px;font-size:10.5px;line-height:12.07px;color:#111;font-weight:normal;font-style:normal;">G</div>
<div class="b" style="left:276px;top:958px;width:18px;height:1px;background:#c4c4c4"></div>
<div class="t" style="left:298.4px;top:953.60px;font-size:10.2px;line-height:11.73px;color:#111;font-weight:normal;font-style:normal;">Bill Item</div>
<div class="t" style="left:360.3px;top:953.33px;font-size:10.5px;line-height:12.07px;color:#111;font-weight:normal;font-style:normal;">H</div>
<div class="t" style="left:450.2px;top:283.03px;font-size:10.85px;line-height:12.48px;color:#111;font-weight:normal;font-style:normal;">The amounts inserted by the Contractor against the items &quot;add for profit&quot;, &quot;add for general</div>
<div class="t" style="left:450.2px;top:297.28px;font-size:10.85px;line-height:12.48px;color:#111;font-weight:normal;font-style:normal;">attendance, coordination and the like&quot; shall be on percentage basis and shall be adjusted on the</div>
<div class="t" style="left:450.2px;top:311.53px;font-size:10.85px;line-height:12.48px;color:#111;font-weight:normal;font-style:normal;">amount of the actual final expenditure. These percentages will be used to adjust the profit and</div>
<div class="t" style="left:450.2px;top:325.78px;font-size:10.85px;line-height:12.48px;color:#111;font-weight:normal;font-style:normal;">attendance in the final account.</div>
<div class="t" style="left:950.3px;top:306.22px;font-size:10.4px;line-height:11.96px;color:#111;font-weight:normal;font-style:normal;">sum</div>
<div class="t" style="left:1093.3px;top:306.22px;font-size:10.4px;line-height:11.96px;color:#111;font-weight:normal;font-style:normal;">0.00</div>
<div class="t" style="left:1179.3px;top:306.22px;font-size:10.4px;line-height:11.96px;color:#111;font-weight:normal;font-style:normal;">0.00</div>
<div class="t" style="left:1290.2px;top:306.22px;font-size:10.4px;line-height:11.96px;color:#111;font-weight:normal;font-style:normal;">0.00</div>
<div class="t" style="left:450.2px;top:347.20px;font-size:10.85px;line-height:12.48px;color:#111;font-weight:normal;font-style:normal;">The term &#x27;Profit&#x27; shall be deemed to include financing cost and other entitlements.</div>
<div class="t" style="left:950.3px;top:348.22px;font-size:10.4px;line-height:11.96px;color:#111;font-weight:normal;font-style:normal;">sum</div>
<div class="t" style="left:1093.3px;top:348.22px;font-size:10.4px;line-height:11.96px;color:#111;font-weight:normal;font-style:normal;">0.00</div>
<div class="t" style="left:1179.3px;top:348.22px;font-size:10.4px;line-height:11.96px;color:#111;font-weight:normal;font-style:normal;">0.00</div>
<div class="t" style="left:1290.2px;top:348.22px;font-size:10.4px;line-height:11.96px;color:#111;font-weight:normal;font-style:normal;">0.00</div>
<div class="t" style="left:450.2px;top:367.15px;font-size:10.85px;line-height:12.48px;color:#111;font-weight:normal;font-style:normal;">Should the Contractor be awarded any work which is the subject of a Prime Cost Sum, his tender for</div>
<div class="t" style="left:450.2px;top:381.40px;font-size:10.85px;line-height:12.48px;color:#111;font-weight:normal;font-style:normal;">that work shall be deemed to include profit and attendance and the amounts allowed by him against</div>
<div class="t" style="left:450.2px;top:395.65px;font-size:10.85px;line-height:12.48px;color:#111;font-weight:normal;font-style:normal;">the Prime Cost Sum will be deducted in the final account.</div>
<div class="t" style="left:950.3px;top:383.22px;font-size:10.4px;line-height:11.96px;color:#111;font-weight:normal;font-style:normal;">sum</div>
<div class="t" style="left:1093.3px;top:383.22px;font-size:10.4px;line-height:11.96px;color:#111;font-weight:normal;font-style:normal;">0.00</div>
<div class="t" style="left:1179.3px;top:383.22px;font-size:10.4px;line-height:11.96px;color:#111;font-weight:normal;font-style:normal;">0.00</div>
<div class="t" style="left:1290.2px;top:383.22px;font-size:10.4px;line-height:11.96px;color:#111;font-weight:normal;font-style:normal;">0.00</div>
<div class="t" style="left:450.2px;top:417.20px;font-size:10.85px;line-height:12.48px;color:#111;font-weight:normal;font-style:normal;">The general attendance provided by the Contractor shall include for the following:-</div>
<div class="t" style="left:950.3px;top:418.22px;font-size:10.4px;line-height:11.96px;color:#111;font-weight:normal;font-style:normal;">sum</div>
<div class="t" style="left:1093.3px;top:418.22px;font-size:10.4px;line-height:11.96px;color:#111;font-weight:normal;font-style:normal;">0.00</div>
<div class="t" style="left:1179.3px;top:418.22px;font-size:10.4px;line-height:11.96px;color:#111;font-weight:normal;font-style:normal;">0.00</div>
<div class="t" style="left:1290.2px;top:418.22px;font-size:10.4px;line-height:11.96px;color:#111;font-weight:normal;font-style:normal;">0.00</div>
<div class="t" style="left:450.2px;top:438.20px;font-size:10.85px;line-height:12.48px;color:#111;font-weight:normal;font-style:normal;">Provision of all reasonable facilities and working space for the proper execution of all work.</div>
<div class="t" style="left:950.3px;top:439.22px;font-size:10.4px;line-height:11.96px;color:#111;font-weight:normal;font-style:normal;">sum</div>
<div class="t" style="left:1093.3px;top:439.22px;font-size:10.4px;line-height:11.96px;color:#111;font-weight:normal;font-style:normal;">0.00</div>
<div class="t" style="left:1179.3px;top:439.22px;font-size:10.4px;line-height:11.96px;color:#111;font-weight:normal;font-style:normal;">0.00</div>
<div class="t" style="left:1290.2px;top:439.22px;font-size:10.4px;line-height:11.96px;color:#111;font-weight:normal;font-style:normal;">0.00</div>
<div class="t" style="left:450.2px;top:459.20px;font-size:10.85px;line-height:12.48px;color:#111;font-weight:normal;font-style:normal;">Free and full use of standing scaffolding.</div>
<div class="t" style="left:950.3px;top:460.22px;font-size:10.4px;line-height:11.96px;color:#111;font-weight:normal;font-style:normal;">sum</div>
<div class="t" style="left:1093.3px;top:460.22px;font-size:10.4px;line-height:11.96px;color:#111;font-weight:normal;font-style:normal;">0.00</div>
<div class="t" style="left:1179.3px;top:460.22px;font-size:10.4px;line-height:11.96px;color:#111;font-weight:normal;font-style:normal;">0.00</div>
<div class="t" style="left:1290.2px;top:460.22px;font-size:10.4px;line-height:11.96px;color:#111;font-weight:normal;font-style:normal;">0.00</div>
<div class="t" style="left:450.2px;top:480.20px;font-size:10.85px;line-height:12.48px;color:#111;font-weight:normal;font-style:normal;">Free use of designated sanitary facilities.</div>
<div class="t" style="left:950.3px;top:481.22px;font-size:10.4px;line-height:11.96px;color:#111;font-weight:normal;font-style:normal;">sum</div>
<div class="t" style="left:1093.3px;top:481.22px;font-size:10.4px;line-height:11.96px;color:#111;font-weight:normal;font-style:normal;">0.00</div>
<div class="t" style="left:1179.3px;top:481.22px;font-size:10.4px;line-height:11.96px;color:#111;font-weight:normal;font-style:normal;">0.00</div>
<div class="t" style="left:1290.2px;top:481.22px;font-size:10.4px;line-height:11.96px;color:#111;font-weight:normal;font-style:normal;">0.00</div>
<div class="t" style="left:450.2px;top:499.78px;font-size:10.85px;line-height:12.48px;color:#111;font-weight:normal;font-style:normal;">Provision of hoisting and lowering facilities for all equipment together with facilities for hoisting and</div>
<div class="t" style="left:450.2px;top:514.03px;font-size:10.85px;line-height:12.48px;color:#111;font-weight:normal;font-style:normal;">lowering of all materials &nbsp;at &nbsp;all &nbsp;times &nbsp;to &nbsp;enable &nbsp;work &nbsp;to &nbsp;proceed expeditiously. The Contractor shall</div>
<div class="t" style="left:450.2px;top:528.28px;font-size:10.85px;line-height:12.48px;color:#111;font-weight:normal;font-style:normal;">ensure that the Works are properly programmed and co-ordinated so that all parties engaged upon the</div>
<div class="t" style="left:450.2px;top:542.53px;font-size:10.85px;line-height:12.48px;color:#111;font-weight:normal;font-style:normal;">Works have free access to all hoisting and lowering facilities on Site. The Contractor shall &nbsp;not be</div>
<div class="t" style="left:450.2px;top:556.78px;font-size:10.85px;line-height:12.48px;color:#111;font-weight:normal;font-style:normal;">responsible &nbsp;for &nbsp;moving &nbsp;equipment &nbsp;or &nbsp;materials &nbsp;to &nbsp;a convenient &nbsp;position for &nbsp;hoisting &nbsp;and</div>
<div class="t" style="left:450.2px;top:571.03px;font-size:10.85px;line-height:12.48px;color:#111;font-weight:normal;font-style:normal;">lowering &nbsp;nor for transporting as necessary to the point of installation.</div>
<div class="t" style="left:950.3px;top:537.22px;font-size:10.4px;line-height:11.96px;color:#111;font-weight:normal;font-style:normal;">sum</div>
<div class="t" style="left:1093.3px;top:537.22px;font-size:10.4px;line-height:11.96px;color:#111;font-weight:normal;font-style:normal;">0.00</div>
<div class="t" style="left:1179.3px;top:537.22px;font-size:10.4px;line-height:11.96px;color:#111;font-weight:normal;font-style:normal;">0.00</div>
<div class="t" style="left:1290.2px;top:537.22px;font-size:10.4px;line-height:11.96px;color:#111;font-weight:normal;font-style:normal;">0.00</div>
<div class="t" style="left:450.2px;top:672.15px;font-size:10.85px;line-height:12.48px;color:#111;font-weight:normal;font-style:normal;">Ascertaining all particulars relating to the Sub-contract works in regard to sizes and positins of</div>
<div class="t" style="left:450.2px;top:686.40px;font-size:10.85px;line-height:12.48px;color:#111;font-weight:normal;font-style:normal;">chases, holes mortices and the like which are to be formed or left in the structure. Be responsible for</div>
<div class="t" style="left:450.2px;top:700.65px;font-size:10.85px;line-height:12.48px;color:#111;font-weight:normal;font-style:normal;">any additional costs incurred as a result of any omission on his part in this respect.</div>
<div class="t" style="left:950.3px;top:688.22px;font-size:10.4px;line-height:11.96px;color:#111;font-weight:normal;font-style:normal;">sum</div>
<div class="t" style="left:1093.3px;top:688.22px;font-size:10.4px;line-height:11.96px;color:#111;font-weight:normal;font-style:normal;">0.00</div>
<div class="t" style="left:1179.3px;top:688.22px;font-size:10.4px;line-height:11.96px;color:#111;font-weight:normal;font-style:normal;">0.00</div>
<div class="t" style="left:1290.2px;top:688.22px;font-size:10.4px;line-height:11.96px;color:#111;font-weight:normal;font-style:normal;">0.00</div>
<div class="t" style="left:450.2px;top:721.15px;font-size:10.85px;line-height:12.48px;color:#111;font-weight:normal;font-style:normal;">Cutting, forming, filling in , grouting and sealing all holes, recesses, mortices, and the like etc., for</div>
<div class="t" style="left:450.2px;top:735.40px;font-size:10.85px;line-height:12.48px;color:#111;font-weight:normal;font-style:normal;">ductwork, pipes, conduits and fittings through brickwalls and concrete works such as walls, floors,</div>
<div class="t" style="left:450.2px;top:749.65px;font-size:10.85px;line-height:12.48px;color:#111;font-weight:normal;font-style:normal;">ceiling, roofs, etc. The Contractor will be required to make good in all cases.</div>
<div class="t" style="left:950.3px;top:737.22px;font-size:10.4px;line-height:11.96px;color:#111;font-weight:normal;font-style:normal;">sum</div>
<div class="t" style="left:1093.3px;top:737.22px;font-size:10.4px;line-height:11.96px;color:#111;font-weight:normal;font-style:normal;">0.00</div>
<div class="t" style="left:1179.3px;top:737.22px;font-size:10.4px;line-height:11.96px;color:#111;font-weight:normal;font-style:normal;">0.00</div>
<div class="t" style="left:1290.2px;top:737.22px;font-size:10.4px;line-height:11.96px;color:#111;font-weight:normal;font-style:normal;">0.00</div>
<div class="t" style="left:450.2px;top:770.28px;font-size:10.85px;line-height:12.48px;color:#111;font-weight:normal;font-style:normal;">Marking the locations of any prestreesing cables (where applicable) on the soffit of structural (floor,</div>
<div class="t" style="left:450.2px;top:784.53px;font-size:10.85px;line-height:12.48px;color:#111;font-weight:normal;font-style:normal;">walls, etc.) will be by the Contractor.</div>
<div class="t" style="left:950.3px;top:779.22px;font-size:10.4px;line-height:11.96px;color:#111;font-weight:normal;font-style:normal;">sum</div>
<div class="t" style="left:1093.3px;top:779.22px;font-size:10.4px;line-height:11.96px;color:#111;font-weight:normal;font-style:normal;">0.00</div>
<div class="t" style="left:1179.3px;top:779.22px;font-size:10.4px;line-height:11.96px;color:#111;font-weight:normal;font-style:normal;">0.00</div>
<div class="t" style="left:1290.2px;top:779.22px;font-size:10.4px;line-height:11.96px;color:#111;font-weight:normal;font-style:normal;">0.00</div>
<div class="t" style="left:450.2px;top:805.28px;font-size:10.85px;line-height:12.48px;color:#111;font-weight:normal;font-style:normal;">Ensure that certain portions of walls and/or floors are left unconstructed &nbsp;until &nbsp;the &nbsp;sub-contractor</div>
<div class="t" style="left:450.2px;top:819.53px;font-size:10.85px;line-height:12.48px;color:#111;font-weight:normal;font-style:normal;">have &nbsp;moved equipment into the structure and to complete the full construction left thereof.</div>
<div class="t" style="left:950.3px;top:814.22px;font-size:10.4px;line-height:11.96px;color:#111;font-weight:normal;font-style:normal;">sum</div>
<div class="t" style="left:1093.3px;top:814.22px;font-size:10.4px;line-height:11.96px;color:#111;font-weight:normal;font-style:normal;">0.00</div>
<div class="t" style="left:1179.3px;top:814.22px;font-size:10.4px;line-height:11.96px;color:#111;font-weight:normal;font-style:normal;">0.00</div>
<div class="t" style="left:1290.2px;top:814.22px;font-size:10.4px;line-height:11.96px;color:#111;font-weight:normal;font-style:normal;">0.00</div>
<div class="t" style="left:450.2px;top:840.28px;font-size:10.85px;line-height:12.48px;color:#111;font-weight:normal;font-style:normal;">Inform all parties of dates of casting concrete so sufficient time to enable other parties to lay cables,</div>
<div class="t" style="left:450.2px;top:854.53px;font-size:10.85px;line-height:12.48px;color:#111;font-weight:normal;font-style:normal;">conduits etc. that are to be cast in.</div>
<div class="t" style="left:950.3px;top:849.22px;font-size:10.4px;line-height:11.96px;color:#111;font-weight:normal;font-style:normal;">sum</div>
<div class="t" style="left:1093.3px;top:849.22px;font-size:10.4px;line-height:11.96px;color:#111;font-weight:normal;font-style:normal;">0.00</div>
<div class="t" style="left:1179.3px;top:849.22px;font-size:10.4px;line-height:11.96px;color:#111;font-weight:normal;font-style:normal;">0.00</div>
<div class="t" style="left:1290.2px;top:849.22px;font-size:10.4px;line-height:11.96px;color:#111;font-weight:normal;font-style:normal;">0.00</div>
<div class="t" style="left:450.2px;top:875.28px;font-size:10.85px;line-height:12.48px;color:#111;font-weight:normal;font-style:normal;">Obtaining, where applicable, all progress claims from Sub- contractors for submission, checking</div>
<div class="t" style="left:450.2px;top:889.53px;font-size:10.85px;line-height:12.48px;color:#111;font-weight:normal;font-style:normal;">validity of the same and consolidate each claim into the Contractor&#x27;s own monthly claim for payment.</div>
<div class="t" style="left:950.3px;top:884.22px;font-size:10.4px;line-height:11.96px;color:#111;font-weight:normal;font-style:normal;">sum</div>
<div class="t" style="left:1093.3px;top:884.22px;font-size:10.4px;line-height:11.96px;color:#111;font-weight:normal;font-style:normal;">0.00</div>
<div class="t" style="left:1179.3px;top:884.22px;font-size:10.4px;line-height:11.96px;color:#111;font-weight:normal;font-style:normal;">0.00</div>
<div class="t" style="left:1290.2px;top:884.22px;font-size:10.4px;line-height:11.96px;color:#111;font-weight:normal;font-style:normal;">0.00</div>
<div class="t" style="left:450.2px;top:911.20px;font-size:10.85px;line-height:12.48px;color:#111;font-weight:normal;font-style:normal;">Providing all &nbsp;necessary proper and &nbsp;sufficient scaffolding including if necessary special scaffolding.</div>
<div class="t" style="left:950.3px;top:912.22px;font-size:10.4px;line-height:11.96px;color:#111;font-weight:normal;font-style:normal;">sum</div>
<div class="t" style="left:1093.3px;top:912.22px;font-size:10.4px;line-height:11.96px;color:#111;font-weight:normal;font-style:normal;">0.00</div>
<div class="t" style="left:1179.3px;top:912.22px;font-size:10.4px;line-height:11.96px;color:#111;font-weight:normal;font-style:normal;">0.00</div>
<div class="t" style="left:1290.2px;top:912.22px;font-size:10.4px;line-height:11.96px;color:#111;font-weight:normal;font-style:normal;">0.00</div>
<div class="t" style="left:450.2px;top:931.03px;font-size:10.85px;line-height:12.48px;color:#111;font-weight:normal;font-style:normal;">The Contractor shall safe-guard all work and materials against damage or theft including all necessary</div>
<div class="t" style="left:450.2px;top:945.28px;font-size:10.85px;line-height:12.48px;color:#111;font-weight:normal;font-style:normal;">watching and lighting for the security of the work and materials. The Contractor shall also be</div>
<div class="t" style="left:450.2px;top:959.53px;font-size:10.85px;line-height:12.48px;color:#111;font-weight:normal;font-style:normal;">responsible for providing adequate site safety for the whole of the works except plant, tools and</div>
<div class="t" style="left:450.2px;top:973.78px;font-size:10.85px;line-height:12.48px;color:#111;font-weight:normal;font-style:normal;">equipment owned by others engaged upon the work.</div>
<div class="t" style="left:950.3px;top:954.22px;font-size:10.4px;line-height:11.96px;color:#111;font-weight:normal;font-style:normal;">sum</div>
<div class="t" style="left:1093.3px;top:954.22px;font-size:10.4px;line-height:11.96px;color:#111;font-weight:normal;font-style:normal;">0.00</div>
<div class="t" style="left:1179.3px;top:954.22px;font-size:10.4px;line-height:11.96px;color:#111;font-weight:normal;font-style:normal;">0.00</div>
<div class="t" style="left:1290.2px;top:954.22px;font-size:10.4px;line-height:11.96px;color:#111;font-weight:normal;font-style:normal;">0.00</div>
<div class="t" style="left:450.3px;top:188.28px;font-size:13.8px;line-height:15.87px;color:#0a6035;font-weight:normal;font-style:normal;-webkit-text-stroke:0.35px currentColor;letter-spacing:0.6px">Bill</div>
<div class="t" style="left:450.3px;top:219.62px;font-size:12.35px;line-height:14.2px;color:#e0770f;font-weight:normal;font-style:normal;-webkit-text-stroke:0.35px currentColor">Element</div>
<div class="t" style="left:450.2px;top:241.07px;font-size:11.75px;line-height:13.51px;color:#111;font-weight:bold;font-style:normal;">Section 2/1</div>
<div class="t" style="left:450.4px;top:263.79px;font-size:10px;line-height:11.5px;color:#2b8fdc;font-weight:normal;font-style:normal;">GENERAL NOTES</div>
<div class="t" style="left:450.3px;top:599.02px;font-size:12.35px;line-height:14.2px;color:#e0770f;font-weight:normal;font-style:normal;-webkit-text-stroke:0.35px currentColor">Element</div>
<div class="t" style="left:450.2px;top:628.87px;font-size:11.75px;line-height:13.51px;color:#111;font-weight:bold;font-style:normal;">Section 2/2</div>
<div class="t" style="left:450.2px;top:650.87px;font-size:11.75px;line-height:13.51px;color:#111;font-weight:bold;font-style:normal;">Section 2/3</div>
<div class="t" style="left:1179.4px;top:188.30px;font-size:12.7px;line-height:14.6px;color:#0a6035;font-weight:normal;font-style:normal;-webkit-text-stroke:0.35px currentColor">5,015,000.00</div>
<div class="t" style="left:1290.2px;top:180.30px;font-size:12.7px;line-height:14.6px;color:#0a6035;font-weight:normal;font-style:normal;-webkit-text-stroke:0.35px currentColor">5,015,00</div>
<div class="t" style="left:1290.2px;top:196.30px;font-size:12.7px;line-height:14.6px;color:#0a6035;font-weight:normal;font-style:normal;-webkit-text-stroke:0.35px currentColor">0.00</div>
<div class="t" style="left:1179.4px;top:219.22px;font-size:11.7px;line-height:13.45px;color:#e0770f;font-weight:normal;font-style:normal;-webkit-text-stroke:0.35px currentColor">0.00</div>
<div class="t" style="left:1290.2px;top:219.22px;font-size:11.7px;line-height:13.45px;color:#e0770f;font-weight:normal;font-style:normal;-webkit-text-stroke:0.35px currentColor">0.00</div>
<div class="t" style="left:1179.3px;top:241.74px;font-size:12px;line-height:13.8px;color:#111;font-weight:bold;font-style:normal;">0.00</div>
<div class="t" style="left:1290.2px;top:241.74px;font-size:12px;line-height:13.8px;color:#111;font-weight:bold;font-style:normal;">0.00</div>
<div class="t" style="left:1179.3px;top:599.85px;font-size:12.1px;line-height:13.91px;color:#e0770f;font-weight:normal;font-style:normal;-webkit-text-stroke:0.35px currentColor">2,210,000.00</div>
<div class="t" style="left:1290.2px;top:591.85px;font-size:12.1px;line-height:13.91px;color:#e0770f;font-weight:normal;font-style:normal;-webkit-text-stroke:0.35px currentColor">2,210,00</div>
<div class="t" style="left:1290.2px;top:606.85px;font-size:12.1px;line-height:13.91px;color:#e0770f;font-weight:normal;font-style:normal;-webkit-text-stroke:0.35px currentColor">0.00</div>
<div class="t" style="left:1179.3px;top:630.04px;font-size:12px;line-height:13.8px;color:#111;font-weight:bold;font-style:normal;">0.00</div>
<div class="t" style="left:1290.2px;top:630.04px;font-size:12px;line-height:13.8px;color:#111;font-weight:bold;font-style:normal;">0.00</div>
<div class="t" style="left:1179.3px;top:652.04px;font-size:12px;line-height:13.8px;color:#111;font-weight:bold;font-style:normal;">0.00</div>
<div class="t" style="left:1290.2px;top:652.04px;font-size:12px;line-height:13.8px;color:#111;font-weight:bold;font-style:normal;">0.00</div>
<div class="b" style="left:1175px;top:236px;width:112px;height:23px;border:2px solid #6a6a6a"></div>
<div class="b" style="left:1724px;top:154px;width:12px;height:866px;background:#f9f9f9"></div>
<div class="b" style="left:1727px;top:158px;width:8px;height:59px;background:#c8c8c8;border-radius:4px"></div>
<div class="t" style="left:29.4px;top:1031.53px;font-size:15.7px;line-height:18.05px;color:#1f6fb8;font-weight:bold;font-style:normal;">Bill of Quantities</div>
<div class="t" style="left:193.2px;top:1031.53px;font-size:15.7px;line-height:18.05px;color:#555;font-weight:normal;font-style:normal;">Schedule of Rates</div>
<div class="t" style="left:5px;top:1061.05px;font-size:10.8px;line-height:12.42px;color:#fff;font-weight:normal;font-style:normal;">363407312@qq.com connected</div>
<div class="b" style="left:1553px;top:1065px;width:8px;height:2px;background:#fff"></div>
<div class="b" style="left:1571px;top:1065px;width:99px;height:2px;background:#0b4f7c"></div>
<div class="b" style="left:1616px;top:1063px;width:7px;height:7px;background:#fff;border-radius:50%"></div>
<div class="b" style="left:1678px;top:1065px;width:11px;height:2px;background:#fff"></div>
<div class="b" style="left:1682.5px;top:1061px;width:2px;height:10px;background:#fff"></div>
<div class="t" style="left:1704px;top:1060.86px;font-size:11px;line-height:12.65px;color:#fff;font-weight:normal;font-style:normal;">100%</div>
<div class="b" style="left:1641px;top:13px;width:10px;height:2px;background:#fff"></div>
<svg style="left:1676px;top:9px" width="12" height="11"><rect x="1" y="1" width="10" height="9" fill="none" stroke="#fff" stroke-width="1.2"/><rect x="1" y="1" width="10" height="2" fill="#fff"/></svg>
<svg style="left:1713px;top:9px" width="11" height="11"><path d="M1 1L10 10M10 1L1 10" stroke="#fff" stroke-width="2.1"/></svg>
<svg style="left:1679px;top:39px" width="11" height="14"><path d="M0 0H10V13L5 10L0 13Z" fill="#fff"/><path d="M5 2.2L5.8 4.4H8L6.2 5.7L6.9 7.9L5 6.5L3.1 7.9L3.8 5.7L2 4.4H4.2Z" fill="#0c67b8"/></svg>
<div class="t" style="left:1420.5px;width:600px;text-align:center;top:38.56px;font-size:13.5px;line-height:15.52px;color:#fff;font-weight:bold;font-style:normal;">?</div>
<svg style="left:0px;top:0px" width="60" height="30" viewBox="0 0 60 30">
<path d="M9 11.4 L17.8 7.1 V26.5 L9 23.3 Z" fill="#b010d2"/>
<path d="M17.8 7.1 L24.6 11.7 V22 L17.8 26.5 Z" fill="#c935ea"/>
<rect x="11.9" y="11.6" width="4" height="4.3" fill="#ecd0fa"/><rect x="11.9" y="18.3" width="4" height="4.4" fill="#ecd0fa"/>
<path d="M20.1 13.3 H21.7 V23.3 H20.1 Z" fill="#f0dcfa"/>
<path d="M18.3 26.2 L24.8 22.6 L21.5 22.6 L18.3 24.5 Z" fill="#f4e8fb"/>
<path d="M40 11.1 H50.7 L53.9 13.9 V24.9 H40 Z" fill="#8fb8e0"/>
<rect x="44" y="13.2" width="5.9" height="2.5" fill="#0c67b8"/><rect x="48" y="13.8" width="1.2" height="1.2" fill="#8fb8e0"/>
<rect x="43.1" y="19.1" width="7.7" height="4.7" fill="#0c67b8"/>
</svg>
<svg style="left:60px;top:5px" width="70" height="25" viewBox="60 5 70 25"><path d="M71.9 12.2 H80 L77.5 14.6 C80.5 16.5 81.5 20 79.5 22.5 C78.5 23.8 77.5 24.5 76.4 24.8 C78 22.5 78 19.5 74.8 17.3 L71.9 20 Z" fill="#8fb8e0"/><path d="M71.9 12.2 H80 L77.5 14.6 C80.5 16.5 81.5 20 79.5 22.5 C78.5 23.8 77.5 24.5 76.4 24.8 C78 22.5 78 19.5 74.8 17.3 L71.9 20 Z" fill="#8fb8e0" transform="translate(186.8 0) scale(-1 1)"/></svg>
<svg style="left:88px;top:17px" width="6" height="4"><path d="M0 0H6L3 3Z" fill="#8fb8e0"/></svg>
<svg style="left:122px;top:17px" width="6" height="4"><path d="M0 0H6L3 3Z" fill="#8fb8e0"/></svg>
<svg style="left:146px;top:13px" width="7" height="8"><rect x="0" y="1" width="6.5" height="1.3" fill="#fff"/><path d="M0 4H6.5L3.25 7.5Z" fill="#fff"/></svg>
<svg style="left:20px;top:68px" width="38" height="38" viewBox="20 68 38 38"><path d="M23 88 L29.3 80.2 H47.7 L55 88 V103 H23 Z" fill="#2b90d9"/><path d="M25.5 88.7 L31 82 H46 L52.5 88.7 H42.9 V91.8 H35.2 V88.7 Z" fill="#175a8c"/><rect x="37.2" y="71" width="3.8" height="14" fill="#e3ae55"/><path d="M33.4 83.8 H45 L39.1 89.8 Z" fill="#e3ae55"/></svg>
<svg style="left:78px;top:70px" width="30" height="34" viewBox="78 70 30 34"><path d="M86 84 H81 V101 H98 V95" fill="none" stroke="#8c8c8c" stroke-width="1.4"/><rect x="85" y="95" width="9" height="0.9" fill="#999"/><rect x="85" y="97" width="9" height="0.9" fill="#999"/><rect x="88" y="73" width="18" height="20" fill="#21a84a"/><path d="M95.5 76.5 L102.5 81.5 M102.5 76.5 L95.5 81.5" stroke="#fff" stroke-width="2"/><path d="M83.5 94 C85 88 89 86 92.5 86.5 L92 84 L97.5 88.5 L92.5 92.5 L92.5 90 C89 89.5 86 91 83.5 94 Z" fill="#2a86d8" stroke="#fff" stroke-width="1"/></svg>
<svg style="left:140px;top:69px" width="34" height="36" viewBox="140 69 34 36"><rect x="143.1" y="71.9" width="22.699999999999996" height="25.999999999999993" rx="1.6" fill="#fff" stroke="#8c8c8c" stroke-width="1.4"/><path d="M146 81.4H149M146 85.4H149M146 89.4H149" stroke="#aaa" stroke-width="1"/><rect x="150.0" y="78.0" width="20.899999999999984" height="23.800000000000004" rx="1.6" fill="#fff" stroke="#8c8c8c" stroke-width="1.4"/><path d="M154 83.5H167M154 87.5H162M154 91.5H159" stroke="#2a8bd3" stroke-width="1.1"/><g transform="translate(163.5 94) scale(0.75)" fill="none" stroke="#d2600f" stroke-width="1.7" stroke-linecap="round" stroke-linejoin="round"><path d="M0 -6.5 L0.3 0.8 L-4.5 7"/><path d="M0.3 0.8 L6 3.5"/></g></svg>
<svg style="left:192px;top:69px" width="33" height="36" viewBox="192 69 33 36"><rect x="195.1" y="71.9" width="26.79999999999999" height="29.9" rx="1.6" fill="#fff" stroke="#8c8c8c" stroke-width="1.4"/><path d="M200.5 82 L202.5 85 L208 79.5 M200.5 89 L202.5 92 L208 86.5" fill="none" stroke="#2aa062" stroke-width="1.9"/><path d="M210 83.5H217" stroke="#2a8bd3" stroke-width="1.1"/><path d="M210 90H211M214 90H217" stroke="#2a8bd3" stroke-width="1.1"/><g transform="translate(213 94) scale(0.72)" fill="none" stroke="#d2600f" stroke-width="1.7" stroke-linecap="round" stroke-linejoin="round"><path d="M0 -6.5 L0.3 0.8 L-4.5 7"/><path d="M0.3 0.8 L6 3.5"/></g></svg>
<svg style="left:244px;top:69px" width="33" height="36" viewBox="244 69 33 36"><rect x="246.7" y="71.69999999999999" width="27.399999999999995" height="30.100000000000012" rx="1.6" fill="#fff" stroke="#bdbdbd" stroke-width="1.2"/><path d="M256 80 L265 93.5 M265 80 L256 93.5" stroke="#d0d0d0" stroke-width="1.1"/><g fill="#a5a5a5"><rect x="253" y="78" width="3.7" height="3.6"/><rect x="264" y="78" width="3.7" height="3.6"/><rect x="253" y="85" width="3.7" height="3.6"/><rect x="264" y="85" width="3.7" height="3.6"/><rect x="253" y="92" width="3.7" height="3.6"/><rect x="264" y="92" width="3.7" height="3.6"/></g></svg>
<svg style="left:296px;top:69px" width="33" height="36" viewBox="296 69 33 36"><rect x="298.90000000000003" y="71.69999999999999" width="27.100000000000012" height="30.100000000000012" rx="1.6" fill="#fff" stroke="#bdbdbd" stroke-width="1.2"/><path d="M306.5 89.5 A6 6 0 0 1 313 80.5 L315 80.5" fill="none" stroke="#a5a5a5" stroke-width="1.8"/><path d="M314.5 77.5 L318.5 80.5 L314.5 83.5 Z" fill="#a5a5a5"/><path d="M318.5 83.5 A6 6 0 0 1 312 92.5 L310 92.5" fill="none" stroke="#a5a5a5" stroke-width="1.8"/><path d="M310.5 89.5 L306.5 92.5 L310.5 95.5 Z" fill="#a5a5a5"/></svg>
<svg style="left:349px;top:69px" width="33" height="36" viewBox="349 69 33 36"><rect x="351.95" y="71.75" width="27.00000000000001" height="30.00000000000001" rx="1.6" fill="#fff" stroke="#7a7a7a" stroke-width="1.3"/><path d="M355 82.5H360M371 82.5H376M355 86.5H360M371 86.5H376M355 96.5H376" stroke="#8a8a8a" stroke-width="0.9"/><rect x="364.2" y="77" width="2" height="8" fill="#2aa062"/><path d="M360.5 84 H370 L365.2 88.5 Z" fill="#2aa062"/><rect x="361" y="90" width="9" height="3" fill="#1e90e8"/><path d="M355 93 L357 90 L359 93Z M372 93 L374 90 L376 93Z" fill="#1e90e8"/></svg>
<svg style="left:412px;top:70px" width="33" height="33" viewBox="412 70 33 33"><rect x="414.1" y="72.1" width="19.8" height="7.8" rx="1.6" fill="#2a8fd6"/><path d="M420.5 80 V98.4 H427.5 M420.5 89.3 H427.5" fill="none" stroke="#7a7a7a" stroke-width="1"/><rect x="427.5" y="87.4" width="14.8" height="4.2" rx="1.3" fill="#d0d0d0" stroke="#808080" stroke-width="0.9"/><rect x="427.5" y="96.4" width="14.8" height="4.2" rx="1.3" fill="#d0d0d0" stroke="#808080" stroke-width="0.9"/></svg>
<svg style="left:464px;top:70px" width="33" height="33" viewBox="464 70 33 33"><rect x="466.5" y="72.3" width="19" height="7.5" rx="1.6" fill="#d6d6d6" stroke="#c4c4c4" stroke-width="0.8"/><path d="M472.4 80 V98.4 H479 M472.4 88.6 H479" fill="none" stroke="#b4b4b4" stroke-width="1"/><rect x="479.1" y="86.4" width="15.6" height="4.4" rx="1.5" fill="#a8a8a8"/><rect x="479.1" y="96.2" width="15.6" height="4.4" rx="1.5" fill="#a8a8a8"/></svg>
<svg style="left:532px;top:71px" width="28" height="32" viewBox="532 71 28 32"><path d="M537.2 76.2 V98.1 M554.6 76.2 V98.1 M537.2 87 H554.6" stroke="#a3a3a3" stroke-width="4.8" stroke-linecap="round"/></svg>
<svg style="left:588px;top:71px" width="23" height="32" viewBox="588 71 23 32"><path d="M593.7 76.2 H605.4 M593.7 98.1 H605.4 M599.5 76.2 V98.1" stroke="#a3a3a3" stroke-width="4.8" stroke-linecap="round"/></svg>
<svg style="left:638px;top:71px" width="28" height="32" viewBox="638 71 28 32"><path d="M643.4 98.1 V76.2 L660.6 98.1 V76.2" fill="none" stroke="#a3a3a3" stroke-width="4.8" stroke-linecap="round" stroke-linejoin="round"/></svg>
<svg style="left:687px;top:69px" width="33" height="36" viewBox="687 69 33 36"><rect x="690.1" y="71.8" width="26.900000000000023" height="30.199999999999992" rx="1.6" fill="#fff" stroke="#bdbdbd" stroke-width="1.2"/><rect x="692.5" y="84.5" width="22" height="5" fill="#dedede"/><path d="M692.5 84.5H714.5M692.5 89.5H714.5" stroke="#a5a5a5" stroke-width="0.9"/><rect x="702.7" y="73.5" width="1.8" height="5.5" fill="#a0a0a0"/><path d="M699.6 78.5 H707.6 L703.6 82.6 Z" fill="#a0a0a0"/><rect x="702.7" y="95" width="1.8" height="5.5" fill="#a0a0a0"/><path d="M699.6 95.5 H707.6 L703.6 91.4 Z" fill="#a0a0a0"/></svg>
<svg style="left:739px;top:69px" width="33" height="36" viewBox="739 69 33 36"><rect x="741.85" y="71.85000000000001" width="27.2" height="30.09999999999999" rx="1.6" fill="#fff" stroke="#7a7a7a" stroke-width="1.3"/><rect x="744" y="84.5" width="22.5" height="5" fill="#c4e6f8"/><path d="M744 84.5H766.5M744 89.5H766.5" stroke="#6f6f6f" stroke-width="0.9"/><path d="M751 78.8 H760 L755.5 74 Z" fill="#25a05a"/><rect x="754.5" y="78" width="2" height="4.5" fill="#25a05a"/><path d="M751 95.2 H760 L755.5 100 Z" fill="#25a05a"/><rect x="754.5" y="91.5" width="2" height="4.5" fill="#25a05a"/><g transform="translate(763.5 96.5) scale(0.62)" fill="none" stroke="#d2600f" stroke-width="1.7" stroke-linecap="round" stroke-linejoin="round"><path d="M0 -6.5 L0.3 0.8 L-4.5 7"/><path d="M0.3 0.8 L6 3.5"/></g></svg>
<svg style="left:789px;top:69px" width="37" height="36" viewBox="789 69 37 36"><rect x="796.1" y="71.8" width="24.699999999999978" height="30.199999999999992" rx="1.6" fill="#fff" stroke="#bdbdbd" stroke-width="1.2"/><path d="M800.5 88.5H816.5M800.5 92.5H816.5M800.5 96.5H816.5" stroke="#c8c8c8" stroke-width="0.9"/><rect x="792" y="75" width="10" height="12" fill="#fff"/><path d="M792.5 77.5 L800.5 85.5 M800.5 77.5 L792.5 85.5" stroke="#a8a8a8" stroke-width="1.6"/><rect x="804" y="78.4" width="20" height="5.2" rx="2" fill="#a8a8a8"/><path d="M810.5 78.4V83.6M817 78.4V83.6" stroke="#c8c8c8" stroke-width="0.6"/></svg>
<svg style="left:852px;top:68px" width="24" height="26" viewBox="852 68 24 26"><path d="M858.8 70.1 V84.7 M869.3 70.1 V84.7 M858.8 77.3 H869.3" stroke="#ababab" stroke-width="3.4"/><path d="M854.5 85.8 V88.3 H865" fill="none" stroke="#ababab" stroke-width="0.9"/><path d="M864 84.8 L868 88.3 L864 91.8Z" fill="#ababab"/></svg>
<svg style="left:889px;top:68px" width="23" height="26" viewBox="889 68 23 26"><path d="M894 71.3 H906 M894 83.9 H906 M900 71.3 V83.9" stroke="#ababab" stroke-width="3"/><path d="M891.5 86.8 V89.3 H902" fill="none" stroke="#ababab" stroke-width="0.9"/><path d="M901 85.8 L905 89.3 L901 92.8Z" fill="#ababab"/></svg>
<svg style="left:852px;top:104px" width="24" height="26" viewBox="852 104 24 26"><path d="M859.5 121 V107.5 H865.5 C869.5 107.5 870 114 865.5 114 H859.5 M865 114 L871.5 121" fill="none" stroke="#ababab" stroke-width="3.2"/><path d="M855.5 122.1 V124.6 H866" fill="none" stroke="#ababab" stroke-width="0.9"/><path d="M865 121.1 L869 124.6 L865 128.1Z" fill="#ababab"/></svg>
<svg style="left:889px;top:104px" width="23" height="26" viewBox="889 104 23 26"><path d="M895.6 121 V107.5 L906.4 121 V107" fill="none" stroke="#ababab" stroke-width="3.2" stroke-linejoin="round"/><path d="M891.5 122.1 V124.6 H902" fill="none" stroke="#ababab" stroke-width="0.9"/><path d="M901 121.1 L905 124.6 L901 128.1Z" fill="#ababab"/></svg>
<svg style="left:929px;top:70px" width="31" height="36" viewBox="929 70 31 36"><g fill="#d2d2d2"><ellipse cx="941" cy="75.5" rx="9" ry="3.3"/><rect x="932" y="75.5" width="18" height="24"/><ellipse cx="941" cy="99.4" rx="9" ry="3.3"/></g><path d="M932 80.5 Q941 84.5 950 80.5 M932 86 Q941 90 950 86 M932 91.5 Q941 95.5 950 91.5" fill="none" stroke="#e8e8e8" stroke-width="0.8"/><rect x="948.3" y="86.8" width="3.2" height="4" transform="rotate(0 949.9 95)" fill="#a5a5a5"/><rect x="948.3" y="86.8" width="3.2" height="4" transform="rotate(45 949.9 95)" fill="#a5a5a5"/><rect x="948.3" y="86.8" width="3.2" height="4" transform="rotate(90 949.9 95)" fill="#a5a5a5"/><rect x="948.3" y="86.8" width="3.2" height="4" transform="rotate(135 949.9 95)" fill="#a5a5a5"/><rect x="948.3" y="86.8" width="3.2" height="4" transform="rotate(180 949.9 95)" fill="#a5a5a5"/><rect x="948.3" y="86.8" width="3.2" height="4" transform="rotate(225 949.9 95)" fill="#a5a5a5"/><rect x="948.3" y="86.8" width="3.2" height="4" transform="rotate(270 949.9 95)" fill="#a5a5a5"/><rect x="948.3" y="86.8" width="3.2" height="4" transform="rotate(315 949.9 95)" fill="#a5a5a5"/><circle cx="949.9" cy="95" r="5.6" fill="#a5a5a5"/><circle cx="949.9" cy="95" r="2" fill="#eee"/></svg>
<svg style="left:988px;top:68px" width="24" height="26" viewBox="988 68 24 26"><rect x="991" y="71.5" width="18" height="1.3" fill="#a8a8a8"/><path d="M993.5 83.5 L1000 76 L1006.5 83.5 Z" fill="#a8a8a8"/><rect x="998.2" y="82" width="3.6" height="8.6" fill="#a8a8a8"/></svg>
<svg style="left:1022px;top:68px" width="28" height="26" viewBox="1022 68 28 26"><rect x="1025" y="71.5" width="23" height="1.3" fill="#a8a8a8"/><rect x="1025" y="89.5" width="23" height="1.3" fill="#a8a8a8"/><path d="M1025 81 L1031 75.5 V86.5 Z" fill="#a8a8a8"/><rect x="1030" y="79.2" width="8" height="3.6" fill="#a8a8a8"/><rect x="1041" y="78.5" width="7" height="1.3" fill="#a8a8a8"/><rect x="1041" y="83.5" width="7" height="1.3" fill="#a8a8a8"/></svg>
<svg style="left:988px;top:104px" width="24" height="26" viewBox="988 104 24 26"><rect x="990" y="125.5" width="18" height="1.3" fill="#a8a8a8"/><path d="M991.5 114 L998 121.5 L1004.5 114 Z" fill="#a8a8a8"/><rect x="996.2" y="107" width="3.6" height="8" fill="#a8a8a8"/></svg>
<svg style="left:1022px;top:104px" width="28" height="26" viewBox="1022 104 28 26"><rect x="1025" y="107.3" width="23" height="1.3" fill="#a8a8a8"/><rect x="1025" y="125.5" width="23" height="1.3" fill="#a8a8a8"/><path d="M1048 116.5 L1042 111 V122 Z" fill="#a8a8a8"/><rect x="1034.5" y="114.7" width="8" height="3.6" fill="#a8a8a8"/><rect x="1025" y="114.5" width="6" height="1.3" fill="#a8a8a8"/><rect x="1025" y="119" width="6" height="1.3" fill="#a8a8a8"/></svg>
<svg style="left:1065px;top:70px" width="30" height="34" viewBox="1065 70 30 34"><path d="M1068.5 77 A11.3 5 0 0 1 1091.1 77 L1082.3 90 V101 A2.5 2.5 0 0 1 1077.3 101 V90 Z" fill="#2a8bd3"/><ellipse cx="1079.8" cy="77" rx="8.7" ry="3" fill="#fff"/></svg>
<svg style="left:1116px;top:69px" width="33" height="36" viewBox="1116 69 33 36"><rect x="1119.0500000000002" y="71.95" width="26.899999999999817" height="29.600000000000005" rx="1.6" fill="#fff" stroke="#8c8c8c" stroke-width="1.3"/><g fill="#cce6f8"><rect x="1122" y="76" width="5" height="5"/><rect x="1122" y="84" width="5" height="5"/><rect x="1122" y="92" width="5" height="5"/></g><path d="M1122 79 L1124.5 82 L1130 76.5 M1122 87 L1124.5 90 L1130 84.5 M1122 95 L1124.5 98 L1130 92.5" fill="none" stroke="#2a8bd3" stroke-width="1.4"/><path d="M1133 77H1143M1133 80H1143M1133 85H1143M1133 88H1143M1133 93H1143M1133 96H1143" stroke="#b4b4b4" stroke-width="0.8"/><path d="M1133 77H1136M1133 85H1136M1133 93H1136" stroke="#666" stroke-width="0.9"/></svg>
<svg style="left:1170px;top:69px" width="33" height="36" viewBox="1170 69 33 36"><rect x="1173.0500000000002" y="71.95" width="26.79999999999991" height="29.600000000000005" rx="1.6" fill="#fff" stroke="#8c8c8c" stroke-width="1.3"/><path d="M1178 92 V81 H1184" fill="none" stroke="#2a8bd3" stroke-width="1.8"/><path d="M1183.5 78 L1187 81 L1183.5 84 Z" fill="#2a8bd3"/><path d="M1174.8 89.5 L1178 93 L1181.2 89.5 Z" fill="#2a8bd3"/><text x="1184" y="86.5" font-family="Liberation Sans" font-weight="bold" font-size="11" fill="#444">.0</text><text x="1178.5" y="98.5" font-family="Liberation Sans" font-weight="bold" font-size="11" fill="#444">.00</text></svg>
<svg style="left:1239px;top:69px" width="30" height="36" viewBox="1239 69 30 36"><rect x="1242.2" y="75" width="23.6" height="26.5" rx="1" fill="#fff" stroke="#a0a0a0" stroke-width="2.5"/><rect x="1247.5" y="73" width="13" height="4" rx="1" fill="#c8c8c8"/><circle cx="1254" cy="73" r="2" fill="#c8c8c8"/><path d="M1247 84.5H1261M1247 88.5H1261M1247 92.5H1261M1247 96.5H1253" stroke="#d6d6d6" stroke-width="0.9"/></svg>
<svg style="left:1286px;top:71px" width="23" height="22" viewBox="1286 71 23 22"><rect x="1288.5" y="76.5" width="13" height="15" rx="1.5" fill="#b9d6f0" stroke="#2a8bd3" stroke-width="1.1"/><rect x="1293.5" y="72.5" width="13" height="15" rx="1.5" fill="#fff" stroke="#2a8bd3" stroke-width="1.1"/><path d="M1296 77.5H1304M1296 80.5H1304M1296 83.5H1301" stroke="#2a8bd3" stroke-width="1"/></svg>
<svg style="left:1284px;top:104px" width="26" height="26" viewBox="1284 104 26 26"><path d="M1289.3 108 L1297.6 117.2 L1295.6 120 Q1288.6 114.5 1289.3 108 Z" fill="#2a8bd3"/><path d="M1303.6 109 L1296.6 117.2 L1298.8 120 Q1304.6 115 1303.6 109 Z" fill="#2a8bd3"/><path d="M1295 117 H1299.5 V120.5 L1300.5 121 H1293.5 L1294.5 120.5 Z" fill="#2a8bd3"/><rect x="1296.5" y="117.6" width="1.6" height="1.6" fill="#fff"/><circle cx="1291.5" cy="122.6" r="2.75" fill="none" stroke="#2a8bd3" stroke-width="1.3"/><circle cx="1301.6" cy="122.6" r="2.75" fill="none" stroke="#2a8bd3" stroke-width="1.3"/></svg>
<svg style="left:1345px;top:70px" width="33" height="34" viewBox="1345 70 33 34"><rect x="1347.65" y="72.85000000000001" width="25.499999999999954" height="29.09999999999999" rx="1.6" fill="#fff" stroke="#8c8c8c" stroke-width="1.3"/><rect x="1352" y="77" width="7" height="20" fill="#d0e8f8"/><rect x="1362" y="77" width="7" height="20" fill="#d0e8f8"/><g fill="none" stroke="#2a8bd3" stroke-width="1.2" stroke-dasharray="3 1.8"><rect x="1352" y="77" width="7" height="20"/><rect x="1362" y="77" width="7" height="20"/></g><path d="M1364 99.5 Q1370 93.5 1376 99.5 Q1370 105.5 1364 99.5 Z" fill="#1f9a4c"/><circle cx="1370" cy="99.5" r="1.8" fill="#fff"/><circle cx="1370" cy="99.5" r="0.9" fill="#1f9a4c"/></svg>
<svg style="left:1409px;top:70px" width="33" height="34" viewBox="1409 70 33 34"><rect x="1421.1" y="71.4" width="7.6" height="19.3" rx="1" fill="#9a9a9a"/><path d="M1421.1 77.5H1428.7M1421.1 83.5H1428.7" stroke="#c0c0c0" stroke-width="0.6"/><rect x="1411.5" y="82.7" width="6.3" height="15.5" fill="none" stroke="#bcbcbc" stroke-width="1"/><rect x="1432.6" y="82.7" width="6.3" height="15.5" fill="none" stroke="#bcbcbc" stroke-width="1"/><path d="M1425 94 V101" stroke="#999" stroke-width="1.3"/><path d="M1421.5 99 L1425 103 L1428.5 99 Z" fill="#999"/></svg>
<svg style="left:1464px;top:69px" width="33" height="36" viewBox="1464 69 33 36"><rect x="1466.8500000000001" y="71.85000000000001" width="27.2" height="30.09999999999999" rx="1.6" fill="#fff" stroke="#707070" stroke-width="1.3"/><rect x="1477.5" y="76" width="6" height="22" fill="#c4e6f8"/><path d="M1477.5 75.5V98.5M1483.5 75.5V98.5" stroke="#707070" stroke-width="0.9"/><path d="M1468.5 87H1474.5M1492.5 87H1486.5" stroke="#25a05a" stroke-width="1.6"/><path d="M1472.5 83.5 L1476.3 87 L1472.5 90.5 Z M1488.5 83.5 L1484.7 87 L1488.5 90.5 Z" fill="#25a05a"/></svg>
<svg style="left:1518px;top:69px" width="33" height="36" viewBox="1518 69 33 36"><rect x="1520.6" y="71.8" width="27.8" height="30.199999999999992" rx="1.6" fill="#fff" stroke="#bdbdbd" stroke-width="1.2"/><path d="M1526 83.5H1530M1539 83.5H1543M1526 87.5H1530M1539 87.5H1543M1526 91.5H1543" stroke="#cfcfcf" stroke-width="0.9"/><rect x="1531" y="73" width="7.3" height="18" rx="2.5" fill="#a5a5a5"/><path d="M1531 79H1538.3M1531 85H1538.3" stroke="#c8c8c8" stroke-width="0.6"/><path d="M1530 93.5 L1539 101.8 M1539 93.5 L1530 101.8" stroke="#bdbdbd" stroke-width="1.6"/></svg>
<svg style="left:1583px;top:69px" width="36" height="36" viewBox="1583 69 36 36"><rect x="1591.75" y="71.85000000000001" width="24.400000000000045" height="30.09999999999999" rx="1.6" fill="#fff" stroke="#8c8c8c" stroke-width="1.3"/><path d="M1596 77.4H1612M1596 97.4H1612" stroke="#b8b8b8" stroke-width="0.9"/><rect x="1585" y="80.1" width="26" height="14.6" fill="#2196e8"/><text x="1598" y="91.2" text-anchor="middle" font-family="Liberation Sans" font-size="9.5" fill="#fff" letter-spacing="0.3">QTY</text></svg>
<svg style="left:1666px;top:69px" width="38" height="37" viewBox="1666 69 38 37"><path d="M1671.5 101.5 L1677.5 86.5 H1694 L1700.5 101.5 Z" fill="none" stroke="#c8c8c8" stroke-width="1.2"/><path d="M1669 72 C1678 72.5 1685 78 1685 89 H1690 L1681.5 99 L1673 89 H1678 C1678 81 1675 76 1669 72 Z" fill="#a5a5a5"/><path d="M1690.5 98.5 L1698.5 90.5" stroke="#a5a5a5" stroke-width="2.6"/><path d="M1689 100 L1689.6 97.6 L1691.4 99.4 Z" fill="#a5a5a5"/></svg>
</body></html>
